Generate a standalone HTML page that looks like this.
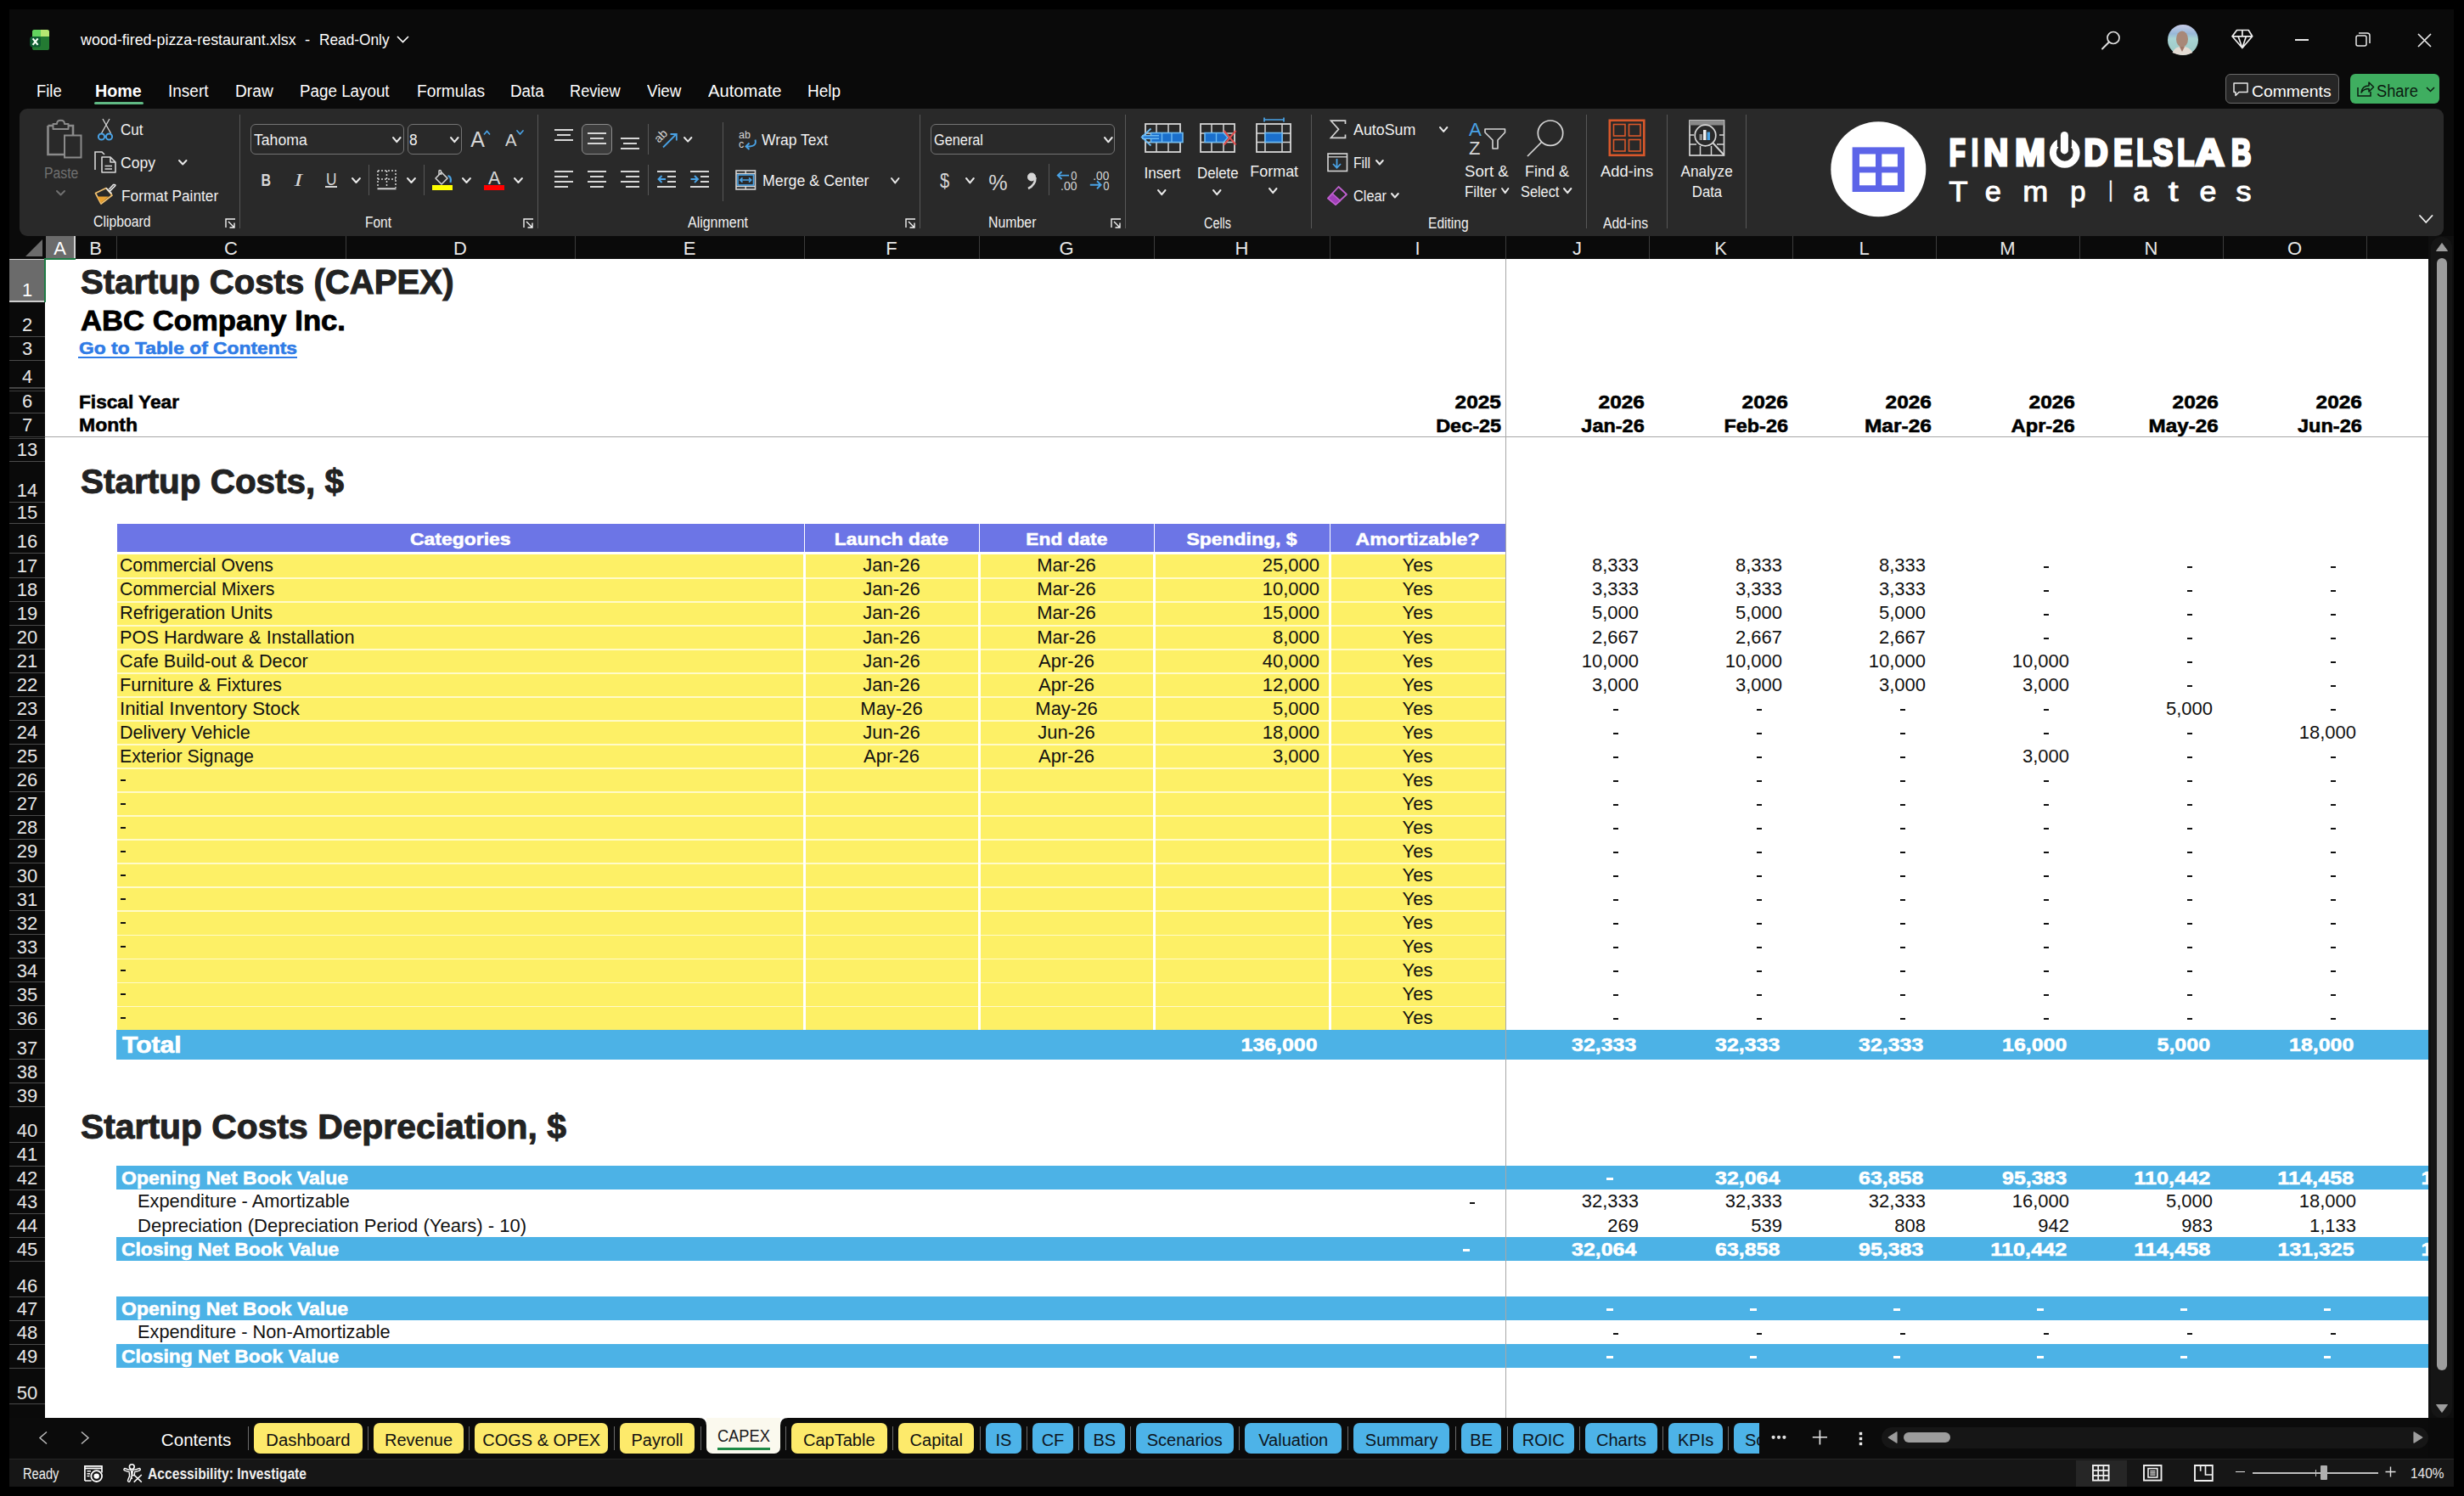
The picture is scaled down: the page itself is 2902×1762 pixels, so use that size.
<!DOCTYPE html>
<html><head><meta charset="utf-8"><style>
*{margin:0;padding:0;box-sizing:border-box}
html,body{width:2902px;height:1762px;overflow:hidden;background:#000;font-family:"Liberation Sans",sans-serif}
div{position:absolute}
.t{white-space:pre}
.t span{display:inline-block}
</style></head><body>
<div style="left:11.0px;top:11.0px;width:2879.0px;height:1740.0px;background:#0a0a0a;"></div>
<svg style="position:absolute;left:35.0px;top:34.0px;overflow:visible;" width="24" height="26" viewBox="0 0 24 26">
<rect x="3" y="1" width="20" height="24" rx="2.6" fill="#237a32"/>
<path d="M5.6 1 H13 V9 H3 V3.6 Q3 1 5.6 1 Z" fill="#62d25e"/>
<path d="M13 1 H20.4 Q23 1 23 3.6 V9 H13 Z" fill="#b6e872"/>
<rect x="0.3" y="9" width="12.7" height="12.4" rx="3" fill="#0e5c31"/>
<path d="M3.6 11.4 L9.6 18.9 M9.6 11.4 L3.6 18.9" stroke="#f4fff4" stroke-width="2.2"/></svg>
<div class="t" style="left:95.4px;top:38.1px;width:4000px;text-align:left;font-size:18.5px;line-height:18.5px;font-weight:400;color:#ffffff;font-family:'Liberation Sans', sans-serif;"><span id="t0" style="transform-origin:left;transform:scaleX(0.9672)">wood-fired-pizza-restaurant.xlsx</span></div>
<div class="t" style="left:-1638.0px;top:38.1px;width:4000px;text-align:center;font-size:18.5px;line-height:18.5px;font-weight:400;color:#ffffff;font-family:'Liberation Sans', sans-serif;"><span id="t1" style="transform-origin:center;">-</span></div>
<div class="t" style="left:376.0px;top:38.1px;width:4000px;text-align:left;font-size:18.5px;line-height:18.5px;font-weight:400;color:#ffffff;font-family:'Liberation Sans', sans-serif;"><span id="t2" style="transform-origin:left;transform:scaleX(0.9340)">Read-Only</span></div>
<svg style="position:absolute;left:467.0px;top:42.0px;overflow:visible;" width="15" height="9" viewBox="0 0 15 9"><path d="M1 1 L7.5 7.5 L14 1" stroke="#fff" stroke-width="1.6" fill="none"/></svg>
<svg style="position:absolute;left:2474.0px;top:36.0px;overflow:visible;" width="24" height="24" viewBox="0 0 24 24"><circle cx="15" cy="8.5" r="7" stroke="#e0e0e0" stroke-width="1.7" fill="none"/><path d="M10 13.5 L2 21.5" stroke="#e0e0e0" stroke-width="1.9" stroke-linecap="round"/></svg>
<svg style="position:absolute;left:2552.0px;top:28.0px;overflow:visible;" width="38" height="38" viewBox="0 0 38 38"><defs><linearGradient id="avbg" x1="0" y1="0" x2="0" y2="1"><stop offset="0" stop-color="#c8cce8"/><stop offset="0.3" stop-color="#98b8d8"/><stop offset="0.45" stop-color="#a8d4d4"/><stop offset="1" stop-color="#9cc8c4"/></linearGradient></defs>
<circle cx="19" cy="19" r="18" fill="url(#avbg)"/><ellipse cx="18" cy="18" rx="7" ry="9.5" fill="#a88878"/><path d="M6.5 34 Q10 26 18 27 Q26 26 30.5 34 Q19 40 6.5 34 Z" fill="#e4dcd4"/><path d="M15 27 L18 33 L21 27" fill="#a07868"/></svg>
<svg style="position:absolute;left:2627.0px;top:33.0px;overflow:visible;" width="28" height="26" viewBox="0 0 28 26"><path d="M7.5 2.5 H21.2 L25.7 9.8 L13.9 23.5 L2 9.8 Z M2 9.8 H25.7 M13.9 2.5 V9.8 M9 9.8 L13.9 23.5 L18.4 9.8" stroke="#f0f0f0" stroke-width="1.7" fill="none" stroke-linejoin="round"/></svg>
<div style="left:2703.0px;top:46.0px;width:16.0px;height:1.6px;background:#e8e8e8;"></div>
<svg style="position:absolute;left:2774.0px;top:38.0px;overflow:visible;" width="18" height="17" viewBox="0 0 18 17"><rect x="1" y="4" width="12" height="12" rx="2" stroke="#e8e8e8" stroke-width="1.5" fill="none"/><path d="M4 1 H14 Q17 1 17 4 V13" stroke="#e8e8e8" stroke-width="1.5" fill="none"/></svg>
<svg style="position:absolute;left:2847.0px;top:39.0px;overflow:visible;" width="17" height="17" viewBox="0 0 17 17"><path d="M1 1 L16 16 M16 1 L1 16" stroke="#e8e8e8" stroke-width="1.7"/></svg>
<div class="t" style="left:42.6px;top:97.1px;width:4000px;text-align:left;font-size:20px;line-height:20px;font-weight:400;color:#ffffff;font-family:'Liberation Sans', sans-serif;"><span id="t3" style="transform-origin:left;transform:scaleX(0.9183)">File</span></div>
<div class="t" style="left:111.6px;top:97.1px;width:4000px;text-align:left;font-size:20px;line-height:20px;font-weight:700;color:#ffffff;font-family:'Liberation Sans', sans-serif;"><span id="t4" style="transform-origin:left;transform:scaleX(0.9860)">Home</span></div>
<div class="t" style="left:198.0px;top:97.1px;width:4000px;text-align:left;font-size:20px;line-height:20px;font-weight:400;color:#ffffff;font-family:'Liberation Sans', sans-serif;"><span id="t5" style="transform-origin:left;transform:scaleX(0.9494)">Insert</span></div>
<div class="t" style="left:277.0px;top:97.1px;width:4000px;text-align:left;font-size:20px;line-height:20px;font-weight:400;color:#ffffff;font-family:'Liberation Sans', sans-serif;"><span id="t6" style="transform-origin:left;transform:scaleX(0.9599)">Draw</span></div>
<div class="t" style="left:353.0px;top:97.1px;width:4000px;text-align:left;font-size:20px;line-height:20px;font-weight:400;color:#ffffff;font-family:'Liberation Sans', sans-serif;"><span id="t7" style="transform-origin:left;transform:scaleX(0.9401)">Page Layout</span></div>
<div class="t" style="left:491.0px;top:97.1px;width:4000px;text-align:left;font-size:20px;line-height:20px;font-weight:400;color:#ffffff;font-family:'Liberation Sans', sans-serif;"><span id="t8" style="transform-origin:left;transform:scaleX(0.9597)">Formulas</span></div>
<div class="t" style="left:600.6px;top:97.1px;width:4000px;text-align:left;font-size:20px;line-height:20px;font-weight:400;color:#ffffff;font-family:'Liberation Sans', sans-serif;"><span id="t9" style="transform-origin:left;transform:scaleX(0.9420)">Data</span></div>
<div class="t" style="left:670.9px;top:97.1px;width:4000px;text-align:left;font-size:20px;line-height:20px;font-weight:400;color:#ffffff;font-family:'Liberation Sans', sans-serif;"><span id="t10" style="transform-origin:left;transform:scaleX(0.9088)">Review</span></div>
<div class="t" style="left:762.0px;top:97.1px;width:4000px;text-align:left;font-size:20px;line-height:20px;font-weight:400;color:#ffffff;font-family:'Liberation Sans', sans-serif;"><span id="t11" style="transform-origin:left;transform:scaleX(0.9395)">View</span></div>
<div class="t" style="left:834.0px;top:97.1px;width:4000px;text-align:left;font-size:20px;line-height:20px;font-weight:400;color:#ffffff;font-family:'Liberation Sans', sans-serif;"><span id="t12" style="transform-origin:left;transform:scaleX(1.0104)">Automate</span></div>
<div class="t" style="left:951.0px;top:97.1px;width:4000px;text-align:left;font-size:20px;line-height:20px;font-weight:400;color:#ffffff;font-family:'Liberation Sans', sans-serif;"><span id="t13" style="transform-origin:left;transform:scaleX(0.9480)">Help</span></div>
<div style="left:111.0px;top:120.0px;width:58.0px;height:3.0px;background:#5fb883;border-radius:1.5px"></div>
<div style="left:2621.0px;top:87.0px;width:134.0px;height:35.0px;background:#262626;border:1.3px solid #6a6a6a;border-radius:6px"></div>
<svg style="position:absolute;left:2629.0px;top:96.0px;overflow:visible;" width="20" height="18" viewBox="0 0 20 18"><path d="M2 2 H18 V12.5 H8 L4 16.5 V12.5 H2 Z" stroke="#e8e8e8" stroke-width="1.5" fill="none" stroke-linejoin="round"/></svg>
<div class="t" style="left:2652.3px;top:97.9px;width:4000px;text-align:left;font-size:19px;line-height:19px;font-weight:400;color:#ffffff;font-family:'Liberation Sans', sans-serif;"><span id="t14" style="transform-origin:left;transform:scaleX(1.0189)">Comments</span></div>
<div style="left:2768.0px;top:87.0px;width:105.0px;height:35.0px;background:#3fae60;border-radius:6px"></div>
<svg style="position:absolute;left:2775.0px;top:95.0px;overflow:visible;" width="22" height="20" viewBox="0 0 22 20"><path d="M2 8 V18 H17 V13" stroke="#0c1a10" stroke-width="1.5" fill="none"/><path d="M6 14 Q7 6 15 6 V2 L20.5 7.5 L15 13 V9.5 Q9 9.5 6 14 Z" stroke="#0c1a10" stroke-width="1.5" fill="none" stroke-linejoin="round"/></svg>
<div class="t" style="left:2798.7px;top:97.1px;width:4000px;text-align:left;font-size:20px;line-height:20px;font-weight:400;color:#0c1a10;font-family:'Liberation Sans', sans-serif;"><span id="t15" style="transform-origin:left;transform:scaleX(0.9143)">Share</span></div>
<svg style="position:absolute;left:2857.0px;top:102.0px;overflow:visible;" width="11" height="7" viewBox="0 0 11 7"><path d="M1 1 L5.5 5.5 L10 1" stroke="#0c1a10" stroke-width="1.5" fill="none"/></svg>
<div style="left:11.0px;top:278.0px;width:2849.0px;height:27.0px;background:#0a0a0a;"></div>
<svg style="position:absolute;left:30.0px;top:282.0px;overflow:visible;" width="21" height="20" viewBox="0 0 21 20"><path d="M20 0 V20 H0 Z" fill="#6b6b6b"/></svg>
<div style="left:53.5px;top:278.0px;width:34.5px;height:26.5px;background:#6b6b6b;"></div>
<div style="left:87.0px;top:278.0px;width:1.5px;height:26.5px;background:#d0d0d0;"></div>
<div class="t" style="left:-1929.5px;top:281.7px;width:4000px;text-align:center;font-size:22px;line-height:22px;font-weight:400;color:#ffffff;font-family:'Liberation Sans', sans-serif;"><span id="t16" style="transform-origin:center;">A</span></div>
<div style="left:136.5px;top:278.0px;width:1.0px;height:27.0px;background:#3c3c3c;"></div>
<div class="t" style="left:-1887.5px;top:281.7px;width:4000px;text-align:center;font-size:22px;line-height:22px;font-weight:400;color:#e8e8e8;font-family:'Liberation Sans', sans-serif;"><span id="t17" style="transform-origin:center;">B</span></div>
<div style="left:406.5px;top:278.0px;width:1.0px;height:27.0px;background:#3c3c3c;"></div>
<div class="t" style="left:-1728.0px;top:281.7px;width:4000px;text-align:center;font-size:22px;line-height:22px;font-weight:400;color:#e8e8e8;font-family:'Liberation Sans', sans-serif;"><span id="t18" style="transform-origin:center;">C</span></div>
<div style="left:676.5px;top:278.0px;width:1.0px;height:27.0px;background:#3c3c3c;"></div>
<div class="t" style="left:-1458.0px;top:281.7px;width:4000px;text-align:center;font-size:22px;line-height:22px;font-weight:400;color:#e8e8e8;font-family:'Liberation Sans', sans-serif;"><span id="t19" style="transform-origin:center;">D</span></div>
<div style="left:946.5px;top:278.0px;width:1.0px;height:27.0px;background:#3c3c3c;"></div>
<div class="t" style="left:-1188.0px;top:281.7px;width:4000px;text-align:center;font-size:22px;line-height:22px;font-weight:400;color:#e8e8e8;font-family:'Liberation Sans', sans-serif;"><span id="t20" style="transform-origin:center;">E</span></div>
<div style="left:1152.5px;top:278.0px;width:1.0px;height:27.0px;background:#3c3c3c;"></div>
<div class="t" style="left:-950.0px;top:281.7px;width:4000px;text-align:center;font-size:22px;line-height:22px;font-weight:400;color:#e8e8e8;font-family:'Liberation Sans', sans-serif;"><span id="t21" style="transform-origin:center;">F</span></div>
<div style="left:1358.5px;top:278.0px;width:1.0px;height:27.0px;background:#3c3c3c;"></div>
<div class="t" style="left:-744.0px;top:281.7px;width:4000px;text-align:center;font-size:22px;line-height:22px;font-weight:400;color:#e8e8e8;font-family:'Liberation Sans', sans-serif;"><span id="t22" style="transform-origin:center;">G</span></div>
<div style="left:1565.5px;top:278.0px;width:1.0px;height:27.0px;background:#3c3c3c;"></div>
<div class="t" style="left:-537.5px;top:281.7px;width:4000px;text-align:center;font-size:22px;line-height:22px;font-weight:400;color:#e8e8e8;font-family:'Liberation Sans', sans-serif;"><span id="t23" style="transform-origin:center;">H</span></div>
<div style="left:1772.5px;top:278.0px;width:1.0px;height:27.0px;background:#3c3c3c;"></div>
<div class="t" style="left:-330.5px;top:281.7px;width:4000px;text-align:center;font-size:22px;line-height:22px;font-weight:400;color:#e8e8e8;font-family:'Liberation Sans', sans-serif;"><span id="t24" style="transform-origin:center;">I</span></div>
<div style="left:1941.5px;top:278.0px;width:1.0px;height:27.0px;background:#3c3c3c;"></div>
<div class="t" style="left:-142.5px;top:281.7px;width:4000px;text-align:center;font-size:22px;line-height:22px;font-weight:400;color:#e8e8e8;font-family:'Liberation Sans', sans-serif;"><span id="t25" style="transform-origin:center;">J</span></div>
<div style="left:2110.5px;top:278.0px;width:1.0px;height:27.0px;background:#3c3c3c;"></div>
<div class="t" style="left:26.5px;top:281.7px;width:4000px;text-align:center;font-size:22px;line-height:22px;font-weight:400;color:#e8e8e8;font-family:'Liberation Sans', sans-serif;"><span id="t26" style="transform-origin:center;">K</span></div>
<div style="left:2279.5px;top:278.0px;width:1.0px;height:27.0px;background:#3c3c3c;"></div>
<div class="t" style="left:195.5px;top:281.7px;width:4000px;text-align:center;font-size:22px;line-height:22px;font-weight:400;color:#e8e8e8;font-family:'Liberation Sans', sans-serif;"><span id="t27" style="transform-origin:center;">L</span></div>
<div style="left:2448.5px;top:278.0px;width:1.0px;height:27.0px;background:#3c3c3c;"></div>
<div class="t" style="left:364.5px;top:281.7px;width:4000px;text-align:center;font-size:22px;line-height:22px;font-weight:400;color:#e8e8e8;font-family:'Liberation Sans', sans-serif;"><span id="t28" style="transform-origin:center;">M</span></div>
<div style="left:2617.5px;top:278.0px;width:1.0px;height:27.0px;background:#3c3c3c;"></div>
<div class="t" style="left:533.5px;top:281.7px;width:4000px;text-align:center;font-size:22px;line-height:22px;font-weight:400;color:#e8e8e8;font-family:'Liberation Sans', sans-serif;"><span id="t29" style="transform-origin:center;">N</span></div>
<div style="left:2786.5px;top:278.0px;width:1.0px;height:27.0px;background:#3c3c3c;"></div>
<div class="t" style="left:702.5px;top:281.7px;width:4000px;text-align:center;font-size:22px;line-height:22px;font-weight:400;color:#e8e8e8;font-family:'Liberation Sans', sans-serif;"><span id="t30" style="transform-origin:center;">O</span></div>
<div style="left:2955.5px;top:278.0px;width:1.0px;height:27.0px;background:#3c3c3c;"></div>
<div style="left:11.0px;top:305.0px;width:42.0px;height:1365.0px;background:#0a0a0a;"></div>
<div class="t" style="left:-1968.0px;top:331.1px;width:4000px;text-align:center;font-size:22px;line-height:22px;font-weight:400;color:#ffffff;font-family:'Liberation Sans', sans-serif;"><span id="t31" style="transform-origin:center;">1</span></div>
<div style="left:11.0px;top:354.5px;width:42.0px;height:1.0px;background:#4a4a4a;"></div>
<div class="t" style="left:-1968.0px;top:372.1px;width:4000px;text-align:center;font-size:22px;line-height:22px;font-weight:400;color:#e6e6e6;font-family:'Liberation Sans', sans-serif;"><span id="t32" style="transform-origin:center;">2</span></div>
<div style="left:11.0px;top:395.5px;width:42.0px;height:1.0px;background:#4a4a4a;"></div>
<div class="t" style="left:-1968.0px;top:400.1px;width:4000px;text-align:center;font-size:22px;line-height:22px;font-weight:400;color:#e6e6e6;font-family:'Liberation Sans', sans-serif;"><span id="t33" style="transform-origin:center;">3</span></div>
<div style="left:11.0px;top:423.5px;width:42.0px;height:1.0px;background:#4a4a4a;"></div>
<div class="t" style="left:-1968.0px;top:432.6px;width:4000px;text-align:center;font-size:22px;line-height:22px;font-weight:400;color:#e6e6e6;font-family:'Liberation Sans', sans-serif;"><span id="t34" style="transform-origin:center;">4</span></div>
<div style="left:11.0px;top:456.0px;width:42.0px;height:1.0px;background:#4a4a4a;"></div>
<div class="t" style="left:-1968.0px;top:462.1px;width:4000px;text-align:center;font-size:22px;line-height:22px;font-weight:400;color:#e6e6e6;font-family:'Liberation Sans', sans-serif;"><span id="t35" style="transform-origin:center;">6</span></div>
<div style="left:11.0px;top:485.5px;width:42.0px;height:1.0px;background:#4a4a4a;"></div>
<div class="t" style="left:-1968.0px;top:490.1px;width:4000px;text-align:center;font-size:22px;line-height:22px;font-weight:400;color:#e6e6e6;font-family:'Liberation Sans', sans-serif;"><span id="t36" style="transform-origin:center;">7</span></div>
<div style="left:11.0px;top:513.5px;width:42.0px;height:1.0px;background:#4a4a4a;"></div>
<div class="t" style="left:-1968.0px;top:519.1px;width:4000px;text-align:center;font-size:22px;line-height:22px;font-weight:400;color:#e6e6e6;font-family:'Liberation Sans', sans-serif;"><span id="t37" style="transform-origin:center;">13</span></div>
<div style="left:11.0px;top:542.5px;width:42.0px;height:1.0px;background:#4a4a4a;"></div>
<div class="t" style="left:-1968.0px;top:567.1px;width:4000px;text-align:center;font-size:22px;line-height:22px;font-weight:400;color:#e6e6e6;font-family:'Liberation Sans', sans-serif;"><span id="t38" style="transform-origin:center;">14</span></div>
<div style="left:11.0px;top:590.5px;width:42.0px;height:1.0px;background:#4a4a4a;"></div>
<div class="t" style="left:-1968.0px;top:592.6px;width:4000px;text-align:center;font-size:22px;line-height:22px;font-weight:400;color:#e6e6e6;font-family:'Liberation Sans', sans-serif;"><span id="t39" style="transform-origin:center;">15</span></div>
<div style="left:11.0px;top:616.0px;width:42.0px;height:1.0px;background:#4a4a4a;"></div>
<div class="t" style="left:-1968.0px;top:627.1px;width:4000px;text-align:center;font-size:22px;line-height:22px;font-weight:400;color:#e6e6e6;font-family:'Liberation Sans', sans-serif;"><span id="t40" style="transform-origin:center;">16</span></div>
<div style="left:11.0px;top:650.5px;width:42.0px;height:1.0px;background:#4a4a4a;"></div>
<div class="t" style="left:-1968.0px;top:656.1px;width:4000px;text-align:center;font-size:22px;line-height:22px;font-weight:400;color:#e6e6e6;font-family:'Liberation Sans', sans-serif;"><span id="t41" style="transform-origin:center;">17</span></div>
<div style="left:11.0px;top:679.5px;width:42.0px;height:1.0px;background:#4a4a4a;"></div>
<div class="t" style="left:-1968.0px;top:684.1px;width:4000px;text-align:center;font-size:22px;line-height:22px;font-weight:400;color:#e6e6e6;font-family:'Liberation Sans', sans-serif;"><span id="t42" style="transform-origin:center;">18</span></div>
<div style="left:11.0px;top:707.5px;width:42.0px;height:1.0px;background:#4a4a4a;"></div>
<div class="t" style="left:-1968.0px;top:712.1px;width:4000px;text-align:center;font-size:22px;line-height:22px;font-weight:400;color:#e6e6e6;font-family:'Liberation Sans', sans-serif;"><span id="t43" style="transform-origin:center;">19</span></div>
<div style="left:11.0px;top:735.6px;width:42.0px;height:1.0px;background:#4a4a4a;"></div>
<div class="t" style="left:-1968.0px;top:740.2px;width:4000px;text-align:center;font-size:22px;line-height:22px;font-weight:400;color:#e6e6e6;font-family:'Liberation Sans', sans-serif;"><span id="t44" style="transform-origin:center;">20</span></div>
<div style="left:11.0px;top:763.6px;width:42.0px;height:1.0px;background:#4a4a4a;"></div>
<div class="t" style="left:-1968.0px;top:768.2px;width:4000px;text-align:center;font-size:22px;line-height:22px;font-weight:400;color:#e6e6e6;font-family:'Liberation Sans', sans-serif;"><span id="t45" style="transform-origin:center;">21</span></div>
<div style="left:11.0px;top:791.6px;width:42.0px;height:1.0px;background:#4a4a4a;"></div>
<div class="t" style="left:-1968.0px;top:796.2px;width:4000px;text-align:center;font-size:22px;line-height:22px;font-weight:400;color:#e6e6e6;font-family:'Liberation Sans', sans-serif;"><span id="t46" style="transform-origin:center;">22</span></div>
<div style="left:11.0px;top:819.6px;width:42.0px;height:1.0px;background:#4a4a4a;"></div>
<div class="t" style="left:-1968.0px;top:824.3px;width:4000px;text-align:center;font-size:22px;line-height:22px;font-weight:400;color:#e6e6e6;font-family:'Liberation Sans', sans-serif;"><span id="t47" style="transform-origin:center;">23</span></div>
<div style="left:11.0px;top:847.7px;width:42.0px;height:1.0px;background:#4a4a4a;"></div>
<div class="t" style="left:-1968.0px;top:852.3px;width:4000px;text-align:center;font-size:22px;line-height:22px;font-weight:400;color:#e6e6e6;font-family:'Liberation Sans', sans-serif;"><span id="t48" style="transform-origin:center;">24</span></div>
<div style="left:11.0px;top:875.7px;width:42.0px;height:1.0px;background:#4a4a4a;"></div>
<div class="t" style="left:-1968.0px;top:880.3px;width:4000px;text-align:center;font-size:22px;line-height:22px;font-weight:400;color:#e6e6e6;font-family:'Liberation Sans', sans-serif;"><span id="t49" style="transform-origin:center;">25</span></div>
<div style="left:11.0px;top:903.7px;width:42.0px;height:1.0px;background:#4a4a4a;"></div>
<div class="t" style="left:-1968.0px;top:908.3px;width:4000px;text-align:center;font-size:22px;line-height:22px;font-weight:400;color:#e6e6e6;font-family:'Liberation Sans', sans-serif;"><span id="t50" style="transform-origin:center;">26</span></div>
<div style="left:11.0px;top:931.8px;width:42.0px;height:1.0px;background:#4a4a4a;"></div>
<div class="t" style="left:-1968.0px;top:936.4px;width:4000px;text-align:center;font-size:22px;line-height:22px;font-weight:400;color:#e6e6e6;font-family:'Liberation Sans', sans-serif;"><span id="t51" style="transform-origin:center;">27</span></div>
<div style="left:11.0px;top:959.8px;width:42.0px;height:1.0px;background:#4a4a4a;"></div>
<div class="t" style="left:-1968.0px;top:964.4px;width:4000px;text-align:center;font-size:22px;line-height:22px;font-weight:400;color:#e6e6e6;font-family:'Liberation Sans', sans-serif;"><span id="t52" style="transform-origin:center;">28</span></div>
<div style="left:11.0px;top:987.8px;width:42.0px;height:1.0px;background:#4a4a4a;"></div>
<div class="t" style="left:-1968.0px;top:992.4px;width:4000px;text-align:center;font-size:22px;line-height:22px;font-weight:400;color:#e6e6e6;font-family:'Liberation Sans', sans-serif;"><span id="t53" style="transform-origin:center;">29</span></div>
<div style="left:11.0px;top:1015.9px;width:42.0px;height:1.0px;background:#4a4a4a;"></div>
<div class="t" style="left:-1968.0px;top:1020.5px;width:4000px;text-align:center;font-size:22px;line-height:22px;font-weight:400;color:#e6e6e6;font-family:'Liberation Sans', sans-serif;"><span id="t54" style="transform-origin:center;">30</span></div>
<div style="left:11.0px;top:1043.9px;width:42.0px;height:1.0px;background:#4a4a4a;"></div>
<div class="t" style="left:-1968.0px;top:1048.5px;width:4000px;text-align:center;font-size:22px;line-height:22px;font-weight:400;color:#e6e6e6;font-family:'Liberation Sans', sans-serif;"><span id="t55" style="transform-origin:center;">31</span></div>
<div style="left:11.0px;top:1071.9px;width:42.0px;height:1.0px;background:#4a4a4a;"></div>
<div class="t" style="left:-1968.0px;top:1076.5px;width:4000px;text-align:center;font-size:22px;line-height:22px;font-weight:400;color:#e6e6e6;font-family:'Liberation Sans', sans-serif;"><span id="t56" style="transform-origin:center;">32</span></div>
<div style="left:11.0px;top:1100.0px;width:42.0px;height:1.0px;background:#4a4a4a;"></div>
<div class="t" style="left:-1968.0px;top:1104.6px;width:4000px;text-align:center;font-size:22px;line-height:22px;font-weight:400;color:#e6e6e6;font-family:'Liberation Sans', sans-serif;"><span id="t57" style="transform-origin:center;">33</span></div>
<div style="left:11.0px;top:1128.0px;width:42.0px;height:1.0px;background:#4a4a4a;"></div>
<div class="t" style="left:-1968.0px;top:1132.6px;width:4000px;text-align:center;font-size:22px;line-height:22px;font-weight:400;color:#e6e6e6;font-family:'Liberation Sans', sans-serif;"><span id="t58" style="transform-origin:center;">34</span></div>
<div style="left:11.0px;top:1156.0px;width:42.0px;height:1.0px;background:#4a4a4a;"></div>
<div class="t" style="left:-1968.0px;top:1160.6px;width:4000px;text-align:center;font-size:22px;line-height:22px;font-weight:400;color:#e6e6e6;font-family:'Liberation Sans', sans-serif;"><span id="t59" style="transform-origin:center;">35</span></div>
<div style="left:11.0px;top:1184.0px;width:42.0px;height:1.0px;background:#4a4a4a;"></div>
<div class="t" style="left:-1968.0px;top:1188.6px;width:4000px;text-align:center;font-size:22px;line-height:22px;font-weight:400;color:#e6e6e6;font-family:'Liberation Sans', sans-serif;"><span id="t60" style="transform-origin:center;">36</span></div>
<div style="left:11.0px;top:1212.1px;width:42.0px;height:1.0px;background:#4a4a4a;"></div>
<div class="t" style="left:-1968.0px;top:1223.7px;width:4000px;text-align:center;font-size:22px;line-height:22px;font-weight:400;color:#e6e6e6;font-family:'Liberation Sans', sans-serif;"><span id="t61" style="transform-origin:center;">37</span></div>
<div style="left:11.0px;top:1247.1px;width:42.0px;height:1.0px;background:#4a4a4a;"></div>
<div class="t" style="left:-1968.0px;top:1251.6px;width:4000px;text-align:center;font-size:22px;line-height:22px;font-weight:400;color:#e6e6e6;font-family:'Liberation Sans', sans-serif;"><span id="t62" style="transform-origin:center;">38</span></div>
<div style="left:11.0px;top:1275.0px;width:42.0px;height:1.0px;background:#4a4a4a;"></div>
<div class="t" style="left:-1968.0px;top:1279.6px;width:4000px;text-align:center;font-size:22px;line-height:22px;font-weight:400;color:#e6e6e6;font-family:'Liberation Sans', sans-serif;"><span id="t63" style="transform-origin:center;">39</span></div>
<div style="left:11.0px;top:1303.0px;width:42.0px;height:1.0px;background:#4a4a4a;"></div>
<div class="t" style="left:-1968.0px;top:1321.3px;width:4000px;text-align:center;font-size:22px;line-height:22px;font-weight:400;color:#e6e6e6;font-family:'Liberation Sans', sans-serif;"><span id="t64" style="transform-origin:center;">40</span></div>
<div style="left:11.0px;top:1344.7px;width:42.0px;height:1.0px;background:#4a4a4a;"></div>
<div class="t" style="left:-1968.0px;top:1349.1px;width:4000px;text-align:center;font-size:22px;line-height:22px;font-weight:400;color:#e6e6e6;font-family:'Liberation Sans', sans-serif;"><span id="t65" style="transform-origin:center;">41</span></div>
<div style="left:11.0px;top:1372.5px;width:42.0px;height:1.0px;background:#4a4a4a;"></div>
<div class="t" style="left:-1968.0px;top:1377.1px;width:4000px;text-align:center;font-size:22px;line-height:22px;font-weight:400;color:#e6e6e6;font-family:'Liberation Sans', sans-serif;"><span id="t66" style="transform-origin:center;">42</span></div>
<div style="left:11.0px;top:1400.5px;width:42.0px;height:1.0px;background:#4a4a4a;"></div>
<div class="t" style="left:-1968.0px;top:1405.1px;width:4000px;text-align:center;font-size:22px;line-height:22px;font-weight:400;color:#e6e6e6;font-family:'Liberation Sans', sans-serif;"><span id="t67" style="transform-origin:center;">43</span></div>
<div style="left:11.0px;top:1428.5px;width:42.0px;height:1.0px;background:#4a4a4a;"></div>
<div class="t" style="left:-1968.0px;top:1433.3px;width:4000px;text-align:center;font-size:22px;line-height:22px;font-weight:400;color:#e6e6e6;font-family:'Liberation Sans', sans-serif;"><span id="t68" style="transform-origin:center;">44</span></div>
<div style="left:11.0px;top:1456.7px;width:42.0px;height:1.0px;background:#4a4a4a;"></div>
<div class="t" style="left:-1968.0px;top:1461.4px;width:4000px;text-align:center;font-size:22px;line-height:22px;font-weight:400;color:#e6e6e6;font-family:'Liberation Sans', sans-serif;"><span id="t69" style="transform-origin:center;">45</span></div>
<div style="left:11.0px;top:1484.8px;width:42.0px;height:1.0px;background:#4a4a4a;"></div>
<div class="t" style="left:-1968.0px;top:1503.5px;width:4000px;text-align:center;font-size:22px;line-height:22px;font-weight:400;color:#e6e6e6;font-family:'Liberation Sans', sans-serif;"><span id="t70" style="transform-origin:center;">46</span></div>
<div style="left:11.0px;top:1526.9px;width:42.0px;height:1.0px;background:#4a4a4a;"></div>
<div class="t" style="left:-1968.0px;top:1531.1px;width:4000px;text-align:center;font-size:22px;line-height:22px;font-weight:400;color:#e6e6e6;font-family:'Liberation Sans', sans-serif;"><span id="t71" style="transform-origin:center;">47</span></div>
<div style="left:11.0px;top:1554.5px;width:42.0px;height:1.0px;background:#4a4a4a;"></div>
<div class="t" style="left:-1968.0px;top:1559.1px;width:4000px;text-align:center;font-size:22px;line-height:22px;font-weight:400;color:#e6e6e6;font-family:'Liberation Sans', sans-serif;"><span id="t72" style="transform-origin:center;">48</span></div>
<div style="left:11.0px;top:1582.5px;width:42.0px;height:1.0px;background:#4a4a4a;"></div>
<div class="t" style="left:-1968.0px;top:1587.3px;width:4000px;text-align:center;font-size:22px;line-height:22px;font-weight:400;color:#e6e6e6;font-family:'Liberation Sans', sans-serif;"><span id="t73" style="transform-origin:center;">49</span></div>
<div style="left:11.0px;top:1610.7px;width:42.0px;height:1.0px;background:#4a4a4a;"></div>
<div class="t" style="left:-1968.0px;top:1629.5px;width:4000px;text-align:center;font-size:22px;line-height:22px;font-weight:400;color:#e6e6e6;font-family:'Liberation Sans', sans-serif;"><span id="t74" style="transform-origin:center;">50</span></div>
<div style="left:11.0px;top:1652.9px;width:42.0px;height:1.0px;background:#4a4a4a;"></div>
<div style="left:11.0px;top:305.0px;width:41.5px;height:49.5px;background:#6b6b6b;"></div>
<div style="left:11.0px;top:304.5px;width:41.5px;height:1.5px;background:#cfcfcf;"></div>
<div style="left:11.0px;top:354.0px;width:41.5px;height:1.5px;background:#cfcfcf;"></div>
<div class="t" style="left:-1968.0px;top:331.1px;width:4000px;text-align:center;font-size:22px;line-height:22px;font-weight:400;color:#ffffff;font-family:'Liberation Sans', sans-serif;"><span id="t75" style="transform-origin:center;">1</span></div>
<div style="left:11.0px;top:456.5px;width:42.0px;height:1.0px;background:#3d3d3d;"></div>
<div style="left:11.0px;top:459.5px;width:42.0px;height:1.0px;background:#3d3d3d;"></div>
<div style="left:11.0px;top:513.5px;width:42.0px;height:1.0px;background:#3d3d3d;"></div>
<div style="left:11.0px;top:516.0px;width:42.0px;height:1.0px;background:#3d3d3d;"></div>
<div style="left:53.0px;top:305.0px;width:2807.0px;height:1365.0px;background:#ffffff;"></div>
<div style="left:52.0px;top:304.0px;width:2.0px;height:52.0px;background:#1e7b45;"></div>
<div style="left:52.0px;top:304.0px;width:37.0px;height:2.0px;background:#1e7b45;"></div>
<div class="t" style="left:95.0px;top:311.6px;width:4000px;text-align:left;font-size:40px;line-height:40px;font-weight:700;color:#222222;font-family:'Liberation Sans', sans-serif;;-webkit-text-stroke:1.00px #222222"><span id="t76" style="transform-origin:left;transform:scaleX(1.0039)">Startup Costs (CAPEX)</span></div>
<div class="t" style="left:95.0px;top:361.1px;width:4000px;text-align:left;font-size:33px;line-height:33px;font-weight:700;color:#000000;font-family:'Liberation Sans', sans-serif;;-webkit-text-stroke:0.83px #000000"><span id="t77" style="transform-origin:left;transform:scaleX(1.0503)">ABC Company Inc.</span></div>
<div class="t" style="left:92.5px;top:400.1px;width:4000px;text-align:left;font-size:20px;line-height:20px;font-weight:700;color:#2f7be6;font-family:'Liberation Sans', sans-serif;;-webkit-text-stroke:0.55px #2f7be6"><span id="t78" style="transform-origin:left;transform:scaleX(1.1414)">Go to Table of Contents</span></div>
<div style="left:92.0px;top:419.5px;width:258.0px;height:2.0px;background:#2f7be6;"></div>
<div class="t" style="left:93.0px;top:462.9px;width:4000px;text-align:left;font-size:22px;line-height:22px;font-weight:700;color:#000;font-family:'Liberation Sans', sans-serif;;-webkit-text-stroke:0.55px #000"><span id="t79" style="transform-origin:left;transform:scaleX(1.0299)">Fiscal Year</span></div>
<div class="t" style="left:93.0px;top:490.4px;width:4000px;text-align:left;font-size:22px;line-height:22px;font-weight:700;color:#000;font-family:'Liberation Sans', sans-serif;;-webkit-text-stroke:0.55px #000"><span id="t80" style="transform-origin:left;transform:scaleX(1.0459)">Month</span></div>
<div class="t" style="left:-2232.0px;top:463.4px;width:4000px;text-align:right;font-size:22px;line-height:22px;font-weight:700;color:#000;font-family:'Liberation Sans', sans-serif;;-webkit-text-stroke:0.55px #000"><span id="t81" style="transform-origin:right;transform:scaleX(1.1113)">2025</span></div>
<div class="t" style="left:-2232.0px;top:490.9px;width:4000px;text-align:right;font-size:22px;line-height:22px;font-weight:700;color:#000;font-family:'Liberation Sans', sans-serif;;-webkit-text-stroke:0.55px #000"><span id="t82" style="transform-origin:right;transform:scaleX(1.0671)">Dec-25</span></div>
<div class="t" style="left:-2063.0px;top:463.4px;width:4000px;text-align:right;font-size:22px;line-height:22px;font-weight:700;color:#000;font-family:'Liberation Sans', sans-serif;;-webkit-text-stroke:0.55px #000"><span id="t83" style="transform-origin:right;transform:scaleX(1.1113)">2026</span></div>
<div class="t" style="left:-2063.0px;top:490.9px;width:4000px;text-align:right;font-size:22px;line-height:22px;font-weight:700;color:#000;font-family:'Liberation Sans', sans-serif;;-webkit-text-stroke:0.55px #000"><span id="t84" style="transform-origin:right;transform:scaleX(1.0671)">Jan-26</span></div>
<div class="t" style="left:-1894.0px;top:463.4px;width:4000px;text-align:right;font-size:22px;line-height:22px;font-weight:700;color:#000;font-family:'Liberation Sans', sans-serif;;-webkit-text-stroke:0.55px #000"><span id="t85" style="transform-origin:right;transform:scaleX(1.1113)">2026</span></div>
<div class="t" style="left:-1894.0px;top:490.9px;width:4000px;text-align:right;font-size:22px;line-height:22px;font-weight:700;color:#000;font-family:'Liberation Sans', sans-serif;;-webkit-text-stroke:0.55px #000"><span id="t86" style="transform-origin:right;transform:scaleX(1.0631)">Feb-26</span></div>
<div class="t" style="left:-1725.0px;top:463.4px;width:4000px;text-align:right;font-size:22px;line-height:22px;font-weight:700;color:#000;font-family:'Liberation Sans', sans-serif;;-webkit-text-stroke:0.55px #000"><span id="t87" style="transform-origin:right;transform:scaleX(1.1113)">2026</span></div>
<div class="t" style="left:-1725.0px;top:490.9px;width:4000px;text-align:right;font-size:22px;line-height:22px;font-weight:700;color:#000;font-family:'Liberation Sans', sans-serif;;-webkit-text-stroke:0.55px #000"><span id="t88" style="transform-origin:right;transform:scaleX(1.1139)">Mar-26</span></div>
<div class="t" style="left:-1556.0px;top:463.4px;width:4000px;text-align:right;font-size:22px;line-height:22px;font-weight:700;color:#000;font-family:'Liberation Sans', sans-serif;;-webkit-text-stroke:0.55px #000"><span id="t89" style="transform-origin:right;transform:scaleX(1.1113)">2026</span></div>
<div class="t" style="left:-1556.0px;top:490.9px;width:4000px;text-align:right;font-size:22px;line-height:22px;font-weight:700;color:#000;font-family:'Liberation Sans', sans-serif;;-webkit-text-stroke:0.55px #000"><span id="t90" style="transform-origin:right;transform:scaleX(1.0791)">Apr-26</span></div>
<div class="t" style="left:-1387.0px;top:463.4px;width:4000px;text-align:right;font-size:22px;line-height:22px;font-weight:700;color:#000;font-family:'Liberation Sans', sans-serif;;-webkit-text-stroke:0.55px #000"><span id="t91" style="transform-origin:right;transform:scaleX(1.1113)">2026</span></div>
<div class="t" style="left:-1387.0px;top:490.9px;width:4000px;text-align:right;font-size:22px;line-height:22px;font-weight:700;color:#000;font-family:'Liberation Sans', sans-serif;;-webkit-text-stroke:0.55px #000"><span id="t92" style="transform-origin:right;transform:scaleX(1.0993)">May-26</span></div>
<div class="t" style="left:-1218.0px;top:463.4px;width:4000px;text-align:right;font-size:22px;line-height:22px;font-weight:700;color:#000;font-family:'Liberation Sans', sans-serif;;-webkit-text-stroke:0.55px #000"><span id="t93" style="transform-origin:right;transform:scaleX(1.1113)">2026</span></div>
<div class="t" style="left:-1218.0px;top:490.9px;width:4000px;text-align:right;font-size:22px;line-height:22px;font-weight:700;color:#000;font-family:'Liberation Sans', sans-serif;;-webkit-text-stroke:0.55px #000"><span id="t94" style="transform-origin:right;transform:scaleX(1.0716)">Jun-26</span></div>
<div style="left:53.0px;top:513.5px;width:2807.0px;height:1.2px;background:#a8a8a8;"></div>
<div class="t" style="left:95.0px;top:546.6px;width:4000px;text-align:left;font-size:40px;line-height:40px;font-weight:700;color:#222222;font-family:'Liberation Sans', sans-serif;;-webkit-text-stroke:1.00px #222222"><span id="t95" style="transform-origin:left;transform:scaleX(1.0107)">Startup Costs, $</span></div>
<div style="left:137.5px;top:617.0px;width:1635.5px;height:33.0px;background:#6c75e6;"></div>
<div style="left:946.7px;top:617.0px;width:1.6px;height:33.0px;background:#ffffff;"></div>
<div style="left:1152.7px;top:617.0px;width:1.6px;height:33.0px;background:#ffffff;"></div>
<div style="left:1358.7px;top:617.0px;width:1.6px;height:33.0px;background:#ffffff;"></div>
<div style="left:1565.7px;top:617.0px;width:1.6px;height:33.0px;background:#ffffff;"></div>
<div class="t" style="left:-1458.0px;top:624.2px;width:4000px;text-align:center;font-size:21px;line-height:21px;font-weight:700;color:#ffffff;font-family:'Liberation Sans', sans-serif;;-webkit-text-stroke:0.55px #ffffff"><span id="t96" style="transform-origin:center;transform:scaleX(1.0917)">Categories</span></div>
<div class="t" style="left:-950.0px;top:624.2px;width:4000px;text-align:center;font-size:21px;line-height:21px;font-weight:700;color:#ffffff;font-family:'Liberation Sans', sans-serif;;-webkit-text-stroke:0.55px #ffffff"><span id="t97" style="transform-origin:center;transform:scaleX(1.0834)">Launch date</span></div>
<div class="t" style="left:-744.0px;top:624.2px;width:4000px;text-align:center;font-size:21px;line-height:21px;font-weight:700;color:#ffffff;font-family:'Liberation Sans', sans-serif;;-webkit-text-stroke:0.55px #ffffff"><span id="t98" style="transform-origin:center;transform:scaleX(1.0825)">End date</span></div>
<div class="t" style="left:-537.5px;top:624.2px;width:4000px;text-align:center;font-size:21px;line-height:21px;font-weight:700;color:#ffffff;font-family:'Liberation Sans', sans-serif;;-webkit-text-stroke:0.55px #ffffff"><span id="t99" style="transform-origin:center;transform:scaleX(1.0923)">Spending, $</span></div>
<div class="t" style="left:-330.5px;top:624.2px;width:4000px;text-align:center;font-size:21px;line-height:21px;font-weight:700;color:#ffffff;font-family:'Liberation Sans', sans-serif;;-webkit-text-stroke:0.55px #ffffff"><span id="t100" style="transform-origin:center;transform:scaleX(1.0976)">Amortizable?</span></div>
<div style="left:138.0px;top:653.0px;width:1635.0px;height:559.6px;background:#fdf066;"></div>
<div style="left:138.0px;top:680.0px;width:1635.0px;height:1.5px;background:#fffbc8;"></div>
<div style="left:138.0px;top:708.0px;width:1635.0px;height:1.5px;background:#fffbc8;"></div>
<div style="left:138.0px;top:736.1px;width:1635.0px;height:1.5px;background:#fffbc8;"></div>
<div style="left:138.0px;top:764.1px;width:1635.0px;height:1.5px;background:#fffbc8;"></div>
<div style="left:138.0px;top:792.1px;width:1635.0px;height:1.5px;background:#fffbc8;"></div>
<div style="left:138.0px;top:820.1px;width:1635.0px;height:1.5px;background:#fffbc8;"></div>
<div style="left:138.0px;top:848.2px;width:1635.0px;height:1.5px;background:#fffbc8;"></div>
<div style="left:138.0px;top:876.2px;width:1635.0px;height:1.5px;background:#fffbc8;"></div>
<div style="left:138.0px;top:904.2px;width:1635.0px;height:1.5px;background:#fffbc8;"></div>
<div style="left:138.0px;top:932.3px;width:1635.0px;height:1.5px;background:#fffbc8;"></div>
<div style="left:138.0px;top:960.3px;width:1635.0px;height:1.5px;background:#fffbc8;"></div>
<div style="left:138.0px;top:988.3px;width:1635.0px;height:1.5px;background:#fffbc8;"></div>
<div style="left:138.0px;top:1016.4px;width:1635.0px;height:1.5px;background:#fffbc8;"></div>
<div style="left:138.0px;top:1044.4px;width:1635.0px;height:1.5px;background:#fffbc8;"></div>
<div style="left:138.0px;top:1072.4px;width:1635.0px;height:1.5px;background:#fffbc8;"></div>
<div style="left:138.0px;top:1100.5px;width:1635.0px;height:1.5px;background:#fffbc8;"></div>
<div style="left:138.0px;top:1128.5px;width:1635.0px;height:1.5px;background:#fffbc8;"></div>
<div style="left:138.0px;top:1156.5px;width:1635.0px;height:1.5px;background:#fffbc8;"></div>
<div style="left:138.0px;top:1184.5px;width:1635.0px;height:1.5px;background:#fffbc8;"></div>
<div style="left:946.0px;top:653.0px;width:3.0px;height:559.6px;background:#ffffff;"></div>
<div style="left:1152.0px;top:653.0px;width:3.0px;height:559.6px;background:#ffffff;"></div>
<div style="left:1358.0px;top:653.0px;width:3.0px;height:559.6px;background:#ffffff;"></div>
<div style="left:1565.0px;top:653.0px;width:3.0px;height:559.6px;background:#ffffff;"></div>
<div class="t" style="left:140.5px;top:655.4px;width:4000px;text-align:left;font-size:22px;line-height:22px;font-weight:400;color:#111111;font-family:'Liberation Sans', sans-serif;"><span id="t101" style="transform-origin:left;transform:scaleX(0.9677)">Commercial Ovens</span></div>
<div class="t" style="left:-950.0px;top:655.4px;width:4000px;text-align:center;font-size:22px;line-height:22px;font-weight:400;color:#111111;font-family:'Liberation Sans', sans-serif;"><span id="t102" style="transform-origin:center;">Jan-26</span></div>
<div class="t" style="left:-744.0px;top:655.4px;width:4000px;text-align:center;font-size:22px;line-height:22px;font-weight:400;color:#111111;font-family:'Liberation Sans', sans-serif;"><span id="t103" style="transform-origin:center;">Mar-26</span></div>
<div class="t" style="left:-2446.0px;top:655.4px;width:4000px;text-align:right;font-size:22px;line-height:22px;font-weight:400;color:#111111;font-family:'Liberation Sans', sans-serif;"><span id="t104" style="transform-origin:right;">25,000</span></div>
<div class="t" style="left:-330.5px;top:655.4px;width:4000px;text-align:center;font-size:22px;line-height:22px;font-weight:400;color:#111111;font-family:'Liberation Sans', sans-serif;"><span id="t105" style="transform-origin:center;">Yes</span></div>
<div class="t" style="left:-2070.0px;top:655.4px;width:4000px;text-align:right;font-size:22px;line-height:22px;font-weight:400;color:#111111;font-family:'Liberation Sans', sans-serif;"><span id="t106" style="transform-origin:right;">8,333</span></div>
<div class="t" style="left:-1901.0px;top:655.4px;width:4000px;text-align:right;font-size:22px;line-height:22px;font-weight:400;color:#111111;font-family:'Liberation Sans', sans-serif;"><span id="t107" style="transform-origin:right;">8,333</span></div>
<div class="t" style="left:-1732.0px;top:655.4px;width:4000px;text-align:right;font-size:22px;line-height:22px;font-weight:400;color:#111111;font-family:'Liberation Sans', sans-serif;"><span id="t108" style="transform-origin:right;">8,333</span></div>
<div style="left:2407.0px;top:666.5px;width:6.0px;height:2.0px;background:#111111;"></div>
<div style="left:2576.0px;top:666.5px;width:6.0px;height:2.0px;background:#111111;"></div>
<div style="left:2745.0px;top:666.5px;width:6.0px;height:2.0px;background:#111111;"></div>
<div class="t" style="left:140.5px;top:683.4px;width:4000px;text-align:left;font-size:22px;line-height:22px;font-weight:400;color:#111111;font-family:'Liberation Sans', sans-serif;"><span id="t109" style="transform-origin:left;transform:scaleX(0.9695)">Commercial Mixers</span></div>
<div class="t" style="left:-950.0px;top:683.4px;width:4000px;text-align:center;font-size:22px;line-height:22px;font-weight:400;color:#111111;font-family:'Liberation Sans', sans-serif;"><span id="t110" style="transform-origin:center;">Jan-26</span></div>
<div class="t" style="left:-744.0px;top:683.4px;width:4000px;text-align:center;font-size:22px;line-height:22px;font-weight:400;color:#111111;font-family:'Liberation Sans', sans-serif;"><span id="t111" style="transform-origin:center;">Mar-26</span></div>
<div class="t" style="left:-2446.0px;top:683.4px;width:4000px;text-align:right;font-size:22px;line-height:22px;font-weight:400;color:#111111;font-family:'Liberation Sans', sans-serif;"><span id="t112" style="transform-origin:right;">10,000</span></div>
<div class="t" style="left:-330.5px;top:683.4px;width:4000px;text-align:center;font-size:22px;line-height:22px;font-weight:400;color:#111111;font-family:'Liberation Sans', sans-serif;"><span id="t113" style="transform-origin:center;">Yes</span></div>
<div class="t" style="left:-2070.0px;top:683.4px;width:4000px;text-align:right;font-size:22px;line-height:22px;font-weight:400;color:#111111;font-family:'Liberation Sans', sans-serif;"><span id="t114" style="transform-origin:right;">3,333</span></div>
<div class="t" style="left:-1901.0px;top:683.4px;width:4000px;text-align:right;font-size:22px;line-height:22px;font-weight:400;color:#111111;font-family:'Liberation Sans', sans-serif;"><span id="t115" style="transform-origin:right;">3,333</span></div>
<div class="t" style="left:-1732.0px;top:683.4px;width:4000px;text-align:right;font-size:22px;line-height:22px;font-weight:400;color:#111111;font-family:'Liberation Sans', sans-serif;"><span id="t116" style="transform-origin:right;">3,333</span></div>
<div style="left:2407.0px;top:694.5px;width:6.0px;height:2.0px;background:#111111;"></div>
<div style="left:2576.0px;top:694.5px;width:6.0px;height:2.0px;background:#111111;"></div>
<div style="left:2745.0px;top:694.5px;width:6.0px;height:2.0px;background:#111111;"></div>
<div class="t" style="left:140.5px;top:711.4px;width:4000px;text-align:left;font-size:22px;line-height:22px;font-weight:400;color:#111111;font-family:'Liberation Sans', sans-serif;"><span id="t117" style="transform-origin:left;transform:scaleX(0.9880)">Refrigeration Units</span></div>
<div class="t" style="left:-950.0px;top:711.4px;width:4000px;text-align:center;font-size:22px;line-height:22px;font-weight:400;color:#111111;font-family:'Liberation Sans', sans-serif;"><span id="t118" style="transform-origin:center;">Jan-26</span></div>
<div class="t" style="left:-744.0px;top:711.4px;width:4000px;text-align:center;font-size:22px;line-height:22px;font-weight:400;color:#111111;font-family:'Liberation Sans', sans-serif;"><span id="t119" style="transform-origin:center;">Mar-26</span></div>
<div class="t" style="left:-2446.0px;top:711.4px;width:4000px;text-align:right;font-size:22px;line-height:22px;font-weight:400;color:#111111;font-family:'Liberation Sans', sans-serif;"><span id="t120" style="transform-origin:right;">15,000</span></div>
<div class="t" style="left:-330.5px;top:711.4px;width:4000px;text-align:center;font-size:22px;line-height:22px;font-weight:400;color:#111111;font-family:'Liberation Sans', sans-serif;"><span id="t121" style="transform-origin:center;">Yes</span></div>
<div class="t" style="left:-2070.0px;top:711.4px;width:4000px;text-align:right;font-size:22px;line-height:22px;font-weight:400;color:#111111;font-family:'Liberation Sans', sans-serif;"><span id="t122" style="transform-origin:right;">5,000</span></div>
<div class="t" style="left:-1901.0px;top:711.4px;width:4000px;text-align:right;font-size:22px;line-height:22px;font-weight:400;color:#111111;font-family:'Liberation Sans', sans-serif;"><span id="t123" style="transform-origin:right;">5,000</span></div>
<div class="t" style="left:-1732.0px;top:711.4px;width:4000px;text-align:right;font-size:22px;line-height:22px;font-weight:400;color:#111111;font-family:'Liberation Sans', sans-serif;"><span id="t124" style="transform-origin:right;">5,000</span></div>
<div style="left:2407.0px;top:722.6px;width:6.0px;height:2.0px;background:#111111;"></div>
<div style="left:2576.0px;top:722.6px;width:6.0px;height:2.0px;background:#111111;"></div>
<div style="left:2745.0px;top:722.6px;width:6.0px;height:2.0px;background:#111111;"></div>
<div class="t" style="left:140.5px;top:739.5px;width:4000px;text-align:left;font-size:22px;line-height:22px;font-weight:400;color:#111111;font-family:'Liberation Sans', sans-serif;"><span id="t125" style="transform-origin:left;transform:scaleX(0.9874)">POS Hardware &amp; Installation</span></div>
<div class="t" style="left:-950.0px;top:739.5px;width:4000px;text-align:center;font-size:22px;line-height:22px;font-weight:400;color:#111111;font-family:'Liberation Sans', sans-serif;"><span id="t126" style="transform-origin:center;">Jan-26</span></div>
<div class="t" style="left:-744.0px;top:739.5px;width:4000px;text-align:center;font-size:22px;line-height:22px;font-weight:400;color:#111111;font-family:'Liberation Sans', sans-serif;"><span id="t127" style="transform-origin:center;">Mar-26</span></div>
<div class="t" style="left:-2446.0px;top:739.5px;width:4000px;text-align:right;font-size:22px;line-height:22px;font-weight:400;color:#111111;font-family:'Liberation Sans', sans-serif;"><span id="t128" style="transform-origin:right;">8,000</span></div>
<div class="t" style="left:-330.5px;top:739.5px;width:4000px;text-align:center;font-size:22px;line-height:22px;font-weight:400;color:#111111;font-family:'Liberation Sans', sans-serif;"><span id="t129" style="transform-origin:center;">Yes</span></div>
<div class="t" style="left:-2070.0px;top:739.5px;width:4000px;text-align:right;font-size:22px;line-height:22px;font-weight:400;color:#111111;font-family:'Liberation Sans', sans-serif;"><span id="t130" style="transform-origin:right;">2,667</span></div>
<div class="t" style="left:-1901.0px;top:739.5px;width:4000px;text-align:right;font-size:22px;line-height:22px;font-weight:400;color:#111111;font-family:'Liberation Sans', sans-serif;"><span id="t131" style="transform-origin:right;">2,667</span></div>
<div class="t" style="left:-1732.0px;top:739.5px;width:4000px;text-align:right;font-size:22px;line-height:22px;font-weight:400;color:#111111;font-family:'Liberation Sans', sans-serif;"><span id="t132" style="transform-origin:right;">2,667</span></div>
<div style="left:2407.0px;top:750.6px;width:6.0px;height:2.0px;background:#111111;"></div>
<div style="left:2576.0px;top:750.6px;width:6.0px;height:2.0px;background:#111111;"></div>
<div style="left:2745.0px;top:750.6px;width:6.0px;height:2.0px;background:#111111;"></div>
<div class="t" style="left:140.5px;top:767.5px;width:4000px;text-align:left;font-size:22px;line-height:22px;font-weight:400;color:#111111;font-family:'Liberation Sans', sans-serif;"><span id="t133" style="transform-origin:left;transform:scaleX(0.9858)">Cafe Build-out &amp; Decor</span></div>
<div class="t" style="left:-950.0px;top:767.5px;width:4000px;text-align:center;font-size:22px;line-height:22px;font-weight:400;color:#111111;font-family:'Liberation Sans', sans-serif;"><span id="t134" style="transform-origin:center;">Jan-26</span></div>
<div class="t" style="left:-744.0px;top:767.5px;width:4000px;text-align:center;font-size:22px;line-height:22px;font-weight:400;color:#111111;font-family:'Liberation Sans', sans-serif;"><span id="t135" style="transform-origin:center;">Apr-26</span></div>
<div class="t" style="left:-2446.0px;top:767.5px;width:4000px;text-align:right;font-size:22px;line-height:22px;font-weight:400;color:#111111;font-family:'Liberation Sans', sans-serif;"><span id="t136" style="transform-origin:right;">40,000</span></div>
<div class="t" style="left:-330.5px;top:767.5px;width:4000px;text-align:center;font-size:22px;line-height:22px;font-weight:400;color:#111111;font-family:'Liberation Sans', sans-serif;"><span id="t137" style="transform-origin:center;">Yes</span></div>
<div class="t" style="left:-2070.0px;top:767.5px;width:4000px;text-align:right;font-size:22px;line-height:22px;font-weight:400;color:#111111;font-family:'Liberation Sans', sans-serif;"><span id="t138" style="transform-origin:right;">10,000</span></div>
<div class="t" style="left:-1901.0px;top:767.5px;width:4000px;text-align:right;font-size:22px;line-height:22px;font-weight:400;color:#111111;font-family:'Liberation Sans', sans-serif;"><span id="t139" style="transform-origin:right;">10,000</span></div>
<div class="t" style="left:-1732.0px;top:767.5px;width:4000px;text-align:right;font-size:22px;line-height:22px;font-weight:400;color:#111111;font-family:'Liberation Sans', sans-serif;"><span id="t140" style="transform-origin:right;">10,000</span></div>
<div class="t" style="left:-1563.0px;top:767.5px;width:4000px;text-align:right;font-size:22px;line-height:22px;font-weight:400;color:#111111;font-family:'Liberation Sans', sans-serif;"><span id="t141" style="transform-origin:right;">10,000</span></div>
<div style="left:2576.0px;top:778.6px;width:6.0px;height:2.0px;background:#111111;"></div>
<div style="left:2745.0px;top:778.6px;width:6.0px;height:2.0px;background:#111111;"></div>
<div class="t" style="left:140.5px;top:795.5px;width:4000px;text-align:left;font-size:22px;line-height:22px;font-weight:400;color:#111111;font-family:'Liberation Sans', sans-serif;"><span id="t142" style="transform-origin:left;transform:scaleX(0.9882)">Furniture &amp; Fixtures</span></div>
<div class="t" style="left:-950.0px;top:795.5px;width:4000px;text-align:center;font-size:22px;line-height:22px;font-weight:400;color:#111111;font-family:'Liberation Sans', sans-serif;"><span id="t143" style="transform-origin:center;">Jan-26</span></div>
<div class="t" style="left:-744.0px;top:795.5px;width:4000px;text-align:center;font-size:22px;line-height:22px;font-weight:400;color:#111111;font-family:'Liberation Sans', sans-serif;"><span id="t144" style="transform-origin:center;">Apr-26</span></div>
<div class="t" style="left:-2446.0px;top:795.5px;width:4000px;text-align:right;font-size:22px;line-height:22px;font-weight:400;color:#111111;font-family:'Liberation Sans', sans-serif;"><span id="t145" style="transform-origin:right;">12,000</span></div>
<div class="t" style="left:-330.5px;top:795.5px;width:4000px;text-align:center;font-size:22px;line-height:22px;font-weight:400;color:#111111;font-family:'Liberation Sans', sans-serif;"><span id="t146" style="transform-origin:center;">Yes</span></div>
<div class="t" style="left:-2070.0px;top:795.5px;width:4000px;text-align:right;font-size:22px;line-height:22px;font-weight:400;color:#111111;font-family:'Liberation Sans', sans-serif;"><span id="t147" style="transform-origin:right;">3,000</span></div>
<div class="t" style="left:-1901.0px;top:795.5px;width:4000px;text-align:right;font-size:22px;line-height:22px;font-weight:400;color:#111111;font-family:'Liberation Sans', sans-serif;"><span id="t148" style="transform-origin:right;">3,000</span></div>
<div class="t" style="left:-1732.0px;top:795.5px;width:4000px;text-align:right;font-size:22px;line-height:22px;font-weight:400;color:#111111;font-family:'Liberation Sans', sans-serif;"><span id="t149" style="transform-origin:right;">3,000</span></div>
<div class="t" style="left:-1563.0px;top:795.5px;width:4000px;text-align:right;font-size:22px;line-height:22px;font-weight:400;color:#111111;font-family:'Liberation Sans', sans-serif;"><span id="t150" style="transform-origin:right;">3,000</span></div>
<div style="left:2576.0px;top:806.6px;width:6.0px;height:2.0px;background:#111111;"></div>
<div style="left:2745.0px;top:806.6px;width:6.0px;height:2.0px;background:#111111;"></div>
<div class="t" style="left:140.5px;top:823.6px;width:4000px;text-align:left;font-size:22px;line-height:22px;font-weight:400;color:#111111;font-family:'Liberation Sans', sans-serif;"><span id="t151" style="transform-origin:left;transform:scaleX(1.0138)">Initial Inventory Stock</span></div>
<div class="t" style="left:-950.0px;top:823.6px;width:4000px;text-align:center;font-size:22px;line-height:22px;font-weight:400;color:#111111;font-family:'Liberation Sans', sans-serif;"><span id="t152" style="transform-origin:center;">May-26</span></div>
<div class="t" style="left:-744.0px;top:823.6px;width:4000px;text-align:center;font-size:22px;line-height:22px;font-weight:400;color:#111111;font-family:'Liberation Sans', sans-serif;"><span id="t153" style="transform-origin:center;">May-26</span></div>
<div class="t" style="left:-2446.0px;top:823.6px;width:4000px;text-align:right;font-size:22px;line-height:22px;font-weight:400;color:#111111;font-family:'Liberation Sans', sans-serif;"><span id="t154" style="transform-origin:right;">5,000</span></div>
<div class="t" style="left:-330.5px;top:823.6px;width:4000px;text-align:center;font-size:22px;line-height:22px;font-weight:400;color:#111111;font-family:'Liberation Sans', sans-serif;"><span id="t155" style="transform-origin:center;">Yes</span></div>
<div style="left:1900.0px;top:834.7px;width:6.0px;height:2.0px;background:#111111;"></div>
<div style="left:2069.0px;top:834.7px;width:6.0px;height:2.0px;background:#111111;"></div>
<div style="left:2238.0px;top:834.7px;width:6.0px;height:2.0px;background:#111111;"></div>
<div style="left:2407.0px;top:834.7px;width:6.0px;height:2.0px;background:#111111;"></div>
<div class="t" style="left:-1394.0px;top:823.6px;width:4000px;text-align:right;font-size:22px;line-height:22px;font-weight:400;color:#111111;font-family:'Liberation Sans', sans-serif;"><span id="t156" style="transform-origin:right;">5,000</span></div>
<div style="left:2745.0px;top:834.7px;width:6.0px;height:2.0px;background:#111111;"></div>
<div class="t" style="left:140.5px;top:851.6px;width:4000px;text-align:left;font-size:22px;line-height:22px;font-weight:400;color:#111111;font-family:'Liberation Sans', sans-serif;"><span id="t157" style="transform-origin:left;transform:scaleX(0.9820)">Delivery Vehicle</span></div>
<div class="t" style="left:-950.0px;top:851.6px;width:4000px;text-align:center;font-size:22px;line-height:22px;font-weight:400;color:#111111;font-family:'Liberation Sans', sans-serif;"><span id="t158" style="transform-origin:center;">Jun-26</span></div>
<div class="t" style="left:-744.0px;top:851.6px;width:4000px;text-align:center;font-size:22px;line-height:22px;font-weight:400;color:#111111;font-family:'Liberation Sans', sans-serif;"><span id="t159" style="transform-origin:center;">Jun-26</span></div>
<div class="t" style="left:-2446.0px;top:851.6px;width:4000px;text-align:right;font-size:22px;line-height:22px;font-weight:400;color:#111111;font-family:'Liberation Sans', sans-serif;"><span id="t160" style="transform-origin:right;">18,000</span></div>
<div class="t" style="left:-330.5px;top:851.6px;width:4000px;text-align:center;font-size:22px;line-height:22px;font-weight:400;color:#111111;font-family:'Liberation Sans', sans-serif;"><span id="t161" style="transform-origin:center;">Yes</span></div>
<div style="left:1900.0px;top:862.7px;width:6.0px;height:2.0px;background:#111111;"></div>
<div style="left:2069.0px;top:862.7px;width:6.0px;height:2.0px;background:#111111;"></div>
<div style="left:2238.0px;top:862.7px;width:6.0px;height:2.0px;background:#111111;"></div>
<div style="left:2407.0px;top:862.7px;width:6.0px;height:2.0px;background:#111111;"></div>
<div style="left:2576.0px;top:862.7px;width:6.0px;height:2.0px;background:#111111;"></div>
<div class="t" style="left:-1225.0px;top:851.6px;width:4000px;text-align:right;font-size:22px;line-height:22px;font-weight:400;color:#111111;font-family:'Liberation Sans', sans-serif;"><span id="t162" style="transform-origin:right;">18,000</span></div>
<div class="t" style="left:140.5px;top:879.6px;width:4000px;text-align:left;font-size:22px;line-height:22px;font-weight:400;color:#111111;font-family:'Liberation Sans', sans-serif;"><span id="t163" style="transform-origin:left;transform:scaleX(0.9708)">Exterior Signage</span></div>
<div class="t" style="left:-950.0px;top:879.6px;width:4000px;text-align:center;font-size:22px;line-height:22px;font-weight:400;color:#111111;font-family:'Liberation Sans', sans-serif;"><span id="t164" style="transform-origin:center;">Apr-26</span></div>
<div class="t" style="left:-744.0px;top:879.6px;width:4000px;text-align:center;font-size:22px;line-height:22px;font-weight:400;color:#111111;font-family:'Liberation Sans', sans-serif;"><span id="t165" style="transform-origin:center;">Apr-26</span></div>
<div class="t" style="left:-2446.0px;top:879.6px;width:4000px;text-align:right;font-size:22px;line-height:22px;font-weight:400;color:#111111;font-family:'Liberation Sans', sans-serif;"><span id="t166" style="transform-origin:right;">3,000</span></div>
<div class="t" style="left:-330.5px;top:879.6px;width:4000px;text-align:center;font-size:22px;line-height:22px;font-weight:400;color:#111111;font-family:'Liberation Sans', sans-serif;"><span id="t167" style="transform-origin:center;">Yes</span></div>
<div style="left:1900.0px;top:890.7px;width:6.0px;height:2.0px;background:#111111;"></div>
<div style="left:2069.0px;top:890.7px;width:6.0px;height:2.0px;background:#111111;"></div>
<div style="left:2238.0px;top:890.7px;width:6.0px;height:2.0px;background:#111111;"></div>
<div class="t" style="left:-1563.0px;top:879.6px;width:4000px;text-align:right;font-size:22px;line-height:22px;font-weight:400;color:#111111;font-family:'Liberation Sans', sans-serif;"><span id="t168" style="transform-origin:right;">3,000</span></div>
<div style="left:2576.0px;top:890.7px;width:6.0px;height:2.0px;background:#111111;"></div>
<div style="left:2745.0px;top:890.7px;width:6.0px;height:2.0px;background:#111111;"></div>
<div style="left:142.0px;top:917.8px;width:6.0px;height:2.0px;background:#111111;"></div>
<div class="t" style="left:-330.5px;top:907.6px;width:4000px;text-align:center;font-size:22px;line-height:22px;font-weight:400;color:#111111;font-family:'Liberation Sans', sans-serif;"><span id="t169" style="transform-origin:center;">Yes</span></div>
<div style="left:1900.0px;top:918.8px;width:6.0px;height:2.0px;background:#111111;"></div>
<div style="left:2069.0px;top:918.8px;width:6.0px;height:2.0px;background:#111111;"></div>
<div style="left:2238.0px;top:918.8px;width:6.0px;height:2.0px;background:#111111;"></div>
<div style="left:2407.0px;top:918.8px;width:6.0px;height:2.0px;background:#111111;"></div>
<div style="left:2576.0px;top:918.8px;width:6.0px;height:2.0px;background:#111111;"></div>
<div style="left:2745.0px;top:918.8px;width:6.0px;height:2.0px;background:#111111;"></div>
<div style="left:142.0px;top:945.8px;width:6.0px;height:2.0px;background:#111111;"></div>
<div class="t" style="left:-330.5px;top:935.7px;width:4000px;text-align:center;font-size:22px;line-height:22px;font-weight:400;color:#111111;font-family:'Liberation Sans', sans-serif;"><span id="t170" style="transform-origin:center;">Yes</span></div>
<div style="left:1900.0px;top:946.8px;width:6.0px;height:2.0px;background:#111111;"></div>
<div style="left:2069.0px;top:946.8px;width:6.0px;height:2.0px;background:#111111;"></div>
<div style="left:2238.0px;top:946.8px;width:6.0px;height:2.0px;background:#111111;"></div>
<div style="left:2407.0px;top:946.8px;width:6.0px;height:2.0px;background:#111111;"></div>
<div style="left:2576.0px;top:946.8px;width:6.0px;height:2.0px;background:#111111;"></div>
<div style="left:2745.0px;top:946.8px;width:6.0px;height:2.0px;background:#111111;"></div>
<div style="left:142.0px;top:973.8px;width:6.0px;height:2.0px;background:#111111;"></div>
<div class="t" style="left:-330.5px;top:963.7px;width:4000px;text-align:center;font-size:22px;line-height:22px;font-weight:400;color:#111111;font-family:'Liberation Sans', sans-serif;"><span id="t171" style="transform-origin:center;">Yes</span></div>
<div style="left:1900.0px;top:974.8px;width:6.0px;height:2.0px;background:#111111;"></div>
<div style="left:2069.0px;top:974.8px;width:6.0px;height:2.0px;background:#111111;"></div>
<div style="left:2238.0px;top:974.8px;width:6.0px;height:2.0px;background:#111111;"></div>
<div style="left:2407.0px;top:974.8px;width:6.0px;height:2.0px;background:#111111;"></div>
<div style="left:2576.0px;top:974.8px;width:6.0px;height:2.0px;background:#111111;"></div>
<div style="left:2745.0px;top:974.8px;width:6.0px;height:2.0px;background:#111111;"></div>
<div style="left:142.0px;top:1001.9px;width:6.0px;height:2.0px;background:#111111;"></div>
<div class="t" style="left:-330.5px;top:991.7px;width:4000px;text-align:center;font-size:22px;line-height:22px;font-weight:400;color:#111111;font-family:'Liberation Sans', sans-serif;"><span id="t172" style="transform-origin:center;">Yes</span></div>
<div style="left:1900.0px;top:1002.9px;width:6.0px;height:2.0px;background:#111111;"></div>
<div style="left:2069.0px;top:1002.9px;width:6.0px;height:2.0px;background:#111111;"></div>
<div style="left:2238.0px;top:1002.9px;width:6.0px;height:2.0px;background:#111111;"></div>
<div style="left:2407.0px;top:1002.9px;width:6.0px;height:2.0px;background:#111111;"></div>
<div style="left:2576.0px;top:1002.9px;width:6.0px;height:2.0px;background:#111111;"></div>
<div style="left:2745.0px;top:1002.9px;width:6.0px;height:2.0px;background:#111111;"></div>
<div style="left:142.0px;top:1029.9px;width:6.0px;height:2.0px;background:#111111;"></div>
<div class="t" style="left:-330.5px;top:1019.8px;width:4000px;text-align:center;font-size:22px;line-height:22px;font-weight:400;color:#111111;font-family:'Liberation Sans', sans-serif;"><span id="t173" style="transform-origin:center;">Yes</span></div>
<div style="left:1900.0px;top:1030.9px;width:6.0px;height:2.0px;background:#111111;"></div>
<div style="left:2069.0px;top:1030.9px;width:6.0px;height:2.0px;background:#111111;"></div>
<div style="left:2238.0px;top:1030.9px;width:6.0px;height:2.0px;background:#111111;"></div>
<div style="left:2407.0px;top:1030.9px;width:6.0px;height:2.0px;background:#111111;"></div>
<div style="left:2576.0px;top:1030.9px;width:6.0px;height:2.0px;background:#111111;"></div>
<div style="left:2745.0px;top:1030.9px;width:6.0px;height:2.0px;background:#111111;"></div>
<div style="left:142.0px;top:1057.9px;width:6.0px;height:2.0px;background:#111111;"></div>
<div class="t" style="left:-330.5px;top:1047.8px;width:4000px;text-align:center;font-size:22px;line-height:22px;font-weight:400;color:#111111;font-family:'Liberation Sans', sans-serif;"><span id="t174" style="transform-origin:center;">Yes</span></div>
<div style="left:1900.0px;top:1058.9px;width:6.0px;height:2.0px;background:#111111;"></div>
<div style="left:2069.0px;top:1058.9px;width:6.0px;height:2.0px;background:#111111;"></div>
<div style="left:2238.0px;top:1058.9px;width:6.0px;height:2.0px;background:#111111;"></div>
<div style="left:2407.0px;top:1058.9px;width:6.0px;height:2.0px;background:#111111;"></div>
<div style="left:2576.0px;top:1058.9px;width:6.0px;height:2.0px;background:#111111;"></div>
<div style="left:2745.0px;top:1058.9px;width:6.0px;height:2.0px;background:#111111;"></div>
<div style="left:142.0px;top:1086.0px;width:6.0px;height:2.0px;background:#111111;"></div>
<div class="t" style="left:-330.5px;top:1075.8px;width:4000px;text-align:center;font-size:22px;line-height:22px;font-weight:400;color:#111111;font-family:'Liberation Sans', sans-serif;"><span id="t175" style="transform-origin:center;">Yes</span></div>
<div style="left:1900.0px;top:1087.0px;width:6.0px;height:2.0px;background:#111111;"></div>
<div style="left:2069.0px;top:1087.0px;width:6.0px;height:2.0px;background:#111111;"></div>
<div style="left:2238.0px;top:1087.0px;width:6.0px;height:2.0px;background:#111111;"></div>
<div style="left:2407.0px;top:1087.0px;width:6.0px;height:2.0px;background:#111111;"></div>
<div style="left:2576.0px;top:1087.0px;width:6.0px;height:2.0px;background:#111111;"></div>
<div style="left:2745.0px;top:1087.0px;width:6.0px;height:2.0px;background:#111111;"></div>
<div style="left:142.0px;top:1114.0px;width:6.0px;height:2.0px;background:#111111;"></div>
<div class="t" style="left:-330.5px;top:1103.9px;width:4000px;text-align:center;font-size:22px;line-height:22px;font-weight:400;color:#111111;font-family:'Liberation Sans', sans-serif;"><span id="t176" style="transform-origin:center;">Yes</span></div>
<div style="left:1900.0px;top:1115.0px;width:6.0px;height:2.0px;background:#111111;"></div>
<div style="left:2069.0px;top:1115.0px;width:6.0px;height:2.0px;background:#111111;"></div>
<div style="left:2238.0px;top:1115.0px;width:6.0px;height:2.0px;background:#111111;"></div>
<div style="left:2407.0px;top:1115.0px;width:6.0px;height:2.0px;background:#111111;"></div>
<div style="left:2576.0px;top:1115.0px;width:6.0px;height:2.0px;background:#111111;"></div>
<div style="left:2745.0px;top:1115.0px;width:6.0px;height:2.0px;background:#111111;"></div>
<div style="left:142.0px;top:1142.0px;width:6.0px;height:2.0px;background:#111111;"></div>
<div class="t" style="left:-330.5px;top:1131.9px;width:4000px;text-align:center;font-size:22px;line-height:22px;font-weight:400;color:#111111;font-family:'Liberation Sans', sans-serif;"><span id="t177" style="transform-origin:center;">Yes</span></div>
<div style="left:1900.0px;top:1143.0px;width:6.0px;height:2.0px;background:#111111;"></div>
<div style="left:2069.0px;top:1143.0px;width:6.0px;height:2.0px;background:#111111;"></div>
<div style="left:2238.0px;top:1143.0px;width:6.0px;height:2.0px;background:#111111;"></div>
<div style="left:2407.0px;top:1143.0px;width:6.0px;height:2.0px;background:#111111;"></div>
<div style="left:2576.0px;top:1143.0px;width:6.0px;height:2.0px;background:#111111;"></div>
<div style="left:2745.0px;top:1143.0px;width:6.0px;height:2.0px;background:#111111;"></div>
<div style="left:142.0px;top:1170.0px;width:6.0px;height:2.0px;background:#111111;"></div>
<div class="t" style="left:-330.5px;top:1159.9px;width:4000px;text-align:center;font-size:22px;line-height:22px;font-weight:400;color:#111111;font-family:'Liberation Sans', sans-serif;"><span id="t178" style="transform-origin:center;">Yes</span></div>
<div style="left:1900.0px;top:1171.0px;width:6.0px;height:2.0px;background:#111111;"></div>
<div style="left:2069.0px;top:1171.0px;width:6.0px;height:2.0px;background:#111111;"></div>
<div style="left:2238.0px;top:1171.0px;width:6.0px;height:2.0px;background:#111111;"></div>
<div style="left:2407.0px;top:1171.0px;width:6.0px;height:2.0px;background:#111111;"></div>
<div style="left:2576.0px;top:1171.0px;width:6.0px;height:2.0px;background:#111111;"></div>
<div style="left:2745.0px;top:1171.0px;width:6.0px;height:2.0px;background:#111111;"></div>
<div style="left:142.0px;top:1198.1px;width:6.0px;height:2.0px;background:#111111;"></div>
<div class="t" style="left:-330.5px;top:1187.9px;width:4000px;text-align:center;font-size:22px;line-height:22px;font-weight:400;color:#111111;font-family:'Liberation Sans', sans-serif;"><span id="t179" style="transform-origin:center;">Yes</span></div>
<div style="left:1900.0px;top:1199.1px;width:6.0px;height:2.0px;background:#111111;"></div>
<div style="left:2069.0px;top:1199.1px;width:6.0px;height:2.0px;background:#111111;"></div>
<div style="left:2238.0px;top:1199.1px;width:6.0px;height:2.0px;background:#111111;"></div>
<div style="left:2407.0px;top:1199.1px;width:6.0px;height:2.0px;background:#111111;"></div>
<div style="left:2576.0px;top:1199.1px;width:6.0px;height:2.0px;background:#111111;"></div>
<div style="left:2745.0px;top:1199.1px;width:6.0px;height:2.0px;background:#111111;"></div>
<div style="left:137.0px;top:1212.6px;width:2723.0px;height:35.0px;background:#4cb2e6;"></div>
<div class="t" style="left:143.9px;top:1216.7px;width:4000px;text-align:left;font-size:27.5px;line-height:27.5px;font-weight:700;color:#ffffff;font-family:'Liberation Sans', sans-serif;;-webkit-text-stroke:0.69px #ffffff"><span id="t180" style="transform-origin:left;transform:scaleX(1.0934)">Total</span></div>
<div class="t" style="left:-2448.2px;top:1219.9px;width:4000px;text-align:right;font-size:22px;line-height:22px;font-weight:700;color:#ffffff;font-family:'Liberation Sans', sans-serif;;-webkit-text-stroke:0.55px #ffffff"><span id="t181" style="transform-origin:right;transform:scaleX(1.1316)">136,000</span></div>
<div class="t" style="left:-2072.5px;top:1219.9px;width:4000px;text-align:right;font-size:22px;line-height:22px;font-weight:700;color:#ffffff;font-family:'Liberation Sans', sans-serif;;-webkit-text-stroke:0.55px #ffffff"><span id="t182" style="transform-origin:right;transform:scaleX(1.1335)">32,333</span></div>
<div class="t" style="left:-1903.5px;top:1219.9px;width:4000px;text-align:right;font-size:22px;line-height:22px;font-weight:700;color:#ffffff;font-family:'Liberation Sans', sans-serif;;-webkit-text-stroke:0.55px #ffffff"><span id="t183" style="transform-origin:right;transform:scaleX(1.1335)">32,333</span></div>
<div class="t" style="left:-1734.5px;top:1219.9px;width:4000px;text-align:right;font-size:22px;line-height:22px;font-weight:700;color:#ffffff;font-family:'Liberation Sans', sans-serif;;-webkit-text-stroke:0.55px #ffffff"><span id="t184" style="transform-origin:right;transform:scaleX(1.1335)">32,333</span></div>
<div class="t" style="left:-1565.5px;top:1219.9px;width:4000px;text-align:right;font-size:22px;line-height:22px;font-weight:700;color:#ffffff;font-family:'Liberation Sans', sans-serif;;-webkit-text-stroke:0.55px #ffffff"><span id="t185" style="transform-origin:right;transform:scaleX(1.1335)">16,000</span></div>
<div class="t" style="left:-1396.5px;top:1219.9px;width:4000px;text-align:right;font-size:22px;line-height:22px;font-weight:700;color:#ffffff;font-family:'Liberation Sans', sans-serif;;-webkit-text-stroke:0.55px #ffffff"><span id="t186" style="transform-origin:right;transform:scaleX(1.1366)">5,000</span></div>
<div class="t" style="left:-1227.5px;top:1219.9px;width:4000px;text-align:right;font-size:22px;line-height:22px;font-weight:700;color:#ffffff;font-family:'Liberation Sans', sans-serif;;-webkit-text-stroke:0.55px #ffffff"><span id="t187" style="transform-origin:right;transform:scaleX(1.1335)">18,000</span></div>
<div class="t" style="left:95.0px;top:1306.6px;width:4000px;text-align:left;font-size:40px;line-height:40px;font-weight:700;color:#222222;font-family:'Liberation Sans', sans-serif;;-webkit-text-stroke:1.00px #222222"><span id="t188" style="transform-origin:left;transform:scaleX(1.0212)">Startup Costs Depreciation, $</span></div>
<div style="left:137.0px;top:1373.0px;width:2723.0px;height:28.0px;background:#4cb2e6;"></div>
<div class="t" style="left:142.5px;top:1376.9px;width:4000px;text-align:left;font-size:22px;line-height:22px;font-weight:700;color:#ffffff;font-family:'Liberation Sans', sans-serif;;-webkit-text-stroke:0.55px #ffffff"><span id="t189" style="transform-origin:left;transform:scaleX(1.0451)">Opening Net Book Value</span></div>
<div style="left:1892.0px;top:1386.8px;width:8.0px;height:3.0px;background:#ffffff;"></div>
<div class="t" style="left:-1903.5px;top:1376.9px;width:4000px;text-align:right;font-size:22px;line-height:22px;font-weight:700;color:#ffffff;font-family:'Liberation Sans', sans-serif;;-webkit-text-stroke:0.55px #ffffff"><span id="t190" style="transform-origin:right;transform:scaleX(1.1335)">32,064</span></div>
<div class="t" style="left:-1734.5px;top:1376.9px;width:4000px;text-align:right;font-size:22px;line-height:22px;font-weight:700;color:#ffffff;font-family:'Liberation Sans', sans-serif;;-webkit-text-stroke:0.55px #ffffff"><span id="t191" style="transform-origin:right;transform:scaleX(1.1335)">63,858</span></div>
<div class="t" style="left:-1565.5px;top:1376.9px;width:4000px;text-align:right;font-size:22px;line-height:22px;font-weight:700;color:#ffffff;font-family:'Liberation Sans', sans-serif;;-webkit-text-stroke:0.55px #ffffff"><span id="t192" style="transform-origin:right;transform:scaleX(1.1335)">95,383</span></div>
<div class="t" style="left:-1396.5px;top:1376.9px;width:4000px;text-align:right;font-size:22px;line-height:22px;font-weight:700;color:#ffffff;font-family:'Liberation Sans', sans-serif;;-webkit-text-stroke:0.55px #ffffff"><span id="t193" style="transform-origin:right;transform:scaleX(1.1490)">110,442</span></div>
<div class="t" style="left:-1227.5px;top:1376.9px;width:4000px;text-align:right;font-size:22px;line-height:22px;font-weight:700;color:#ffffff;font-family:'Liberation Sans', sans-serif;;-webkit-text-stroke:0.55px #ffffff"><span id="t194" style="transform-origin:right;transform:scaleX(1.1490)">114,458</span></div>
<div class="t" style="left:-1058.5px;top:1376.9px;width:4000px;text-align:right;font-size:22px;line-height:22px;font-weight:700;color:#ffffff;font-family:'Liberation Sans', sans-serif;;-webkit-text-stroke:0.55px #ffffff"><span id="t195" style="transform-origin:right;transform:scaleX(1.1313)">131,325</span></div>
<div class="t" style="left:162.0px;top:1404.4px;width:4000px;text-align:left;font-size:22px;line-height:22px;font-weight:400;color:#111111;font-family:'Liberation Sans', sans-serif;"><span id="t196" style="transform-origin:left;transform:scaleX(0.9924)">Expenditure - Amortizable</span></div>
<div style="left:1731.0px;top:1415.5px;width:6.0px;height:2.0px;background:#111111;"></div>
<div class="t" style="left:-2070.0px;top:1404.4px;width:4000px;text-align:right;font-size:22px;line-height:22px;font-weight:400;color:#111111;font-family:'Liberation Sans', sans-serif;"><span id="t197" style="transform-origin:right;">32,333</span></div>
<div class="t" style="left:-1901.0px;top:1404.4px;width:4000px;text-align:right;font-size:22px;line-height:22px;font-weight:400;color:#111111;font-family:'Liberation Sans', sans-serif;"><span id="t198" style="transform-origin:right;">32,333</span></div>
<div class="t" style="left:-1732.0px;top:1404.4px;width:4000px;text-align:right;font-size:22px;line-height:22px;font-weight:400;color:#111111;font-family:'Liberation Sans', sans-serif;"><span id="t199" style="transform-origin:right;">32,333</span></div>
<div class="t" style="left:-1563.0px;top:1404.4px;width:4000px;text-align:right;font-size:22px;line-height:22px;font-weight:400;color:#111111;font-family:'Liberation Sans', sans-serif;"><span id="t200" style="transform-origin:right;">16,000</span></div>
<div class="t" style="left:-1394.0px;top:1404.4px;width:4000px;text-align:right;font-size:22px;line-height:22px;font-weight:400;color:#111111;font-family:'Liberation Sans', sans-serif;"><span id="t201" style="transform-origin:right;">5,000</span></div>
<div class="t" style="left:-1225.0px;top:1404.4px;width:4000px;text-align:right;font-size:22px;line-height:22px;font-weight:400;color:#111111;font-family:'Liberation Sans', sans-serif;"><span id="t202" style="transform-origin:right;">18,000</span></div>
<div class="t" style="left:162.0px;top:1432.6px;width:4000px;text-align:left;font-size:22px;line-height:22px;font-weight:400;color:#111111;font-family:'Liberation Sans', sans-serif;"><span id="t203" style="transform-origin:left;transform:scaleX(1.0005)">Depreciation (Depreciation Period (Years) - 10)</span></div>
<div class="t" style="left:-2070.0px;top:1432.6px;width:4000px;text-align:right;font-size:22px;line-height:22px;font-weight:400;color:#111111;font-family:'Liberation Sans', sans-serif;"><span id="t204" style="transform-origin:right;">269</span></div>
<div class="t" style="left:-1901.0px;top:1432.6px;width:4000px;text-align:right;font-size:22px;line-height:22px;font-weight:400;color:#111111;font-family:'Liberation Sans', sans-serif;"><span id="t205" style="transform-origin:right;">539</span></div>
<div class="t" style="left:-1732.0px;top:1432.6px;width:4000px;text-align:right;font-size:22px;line-height:22px;font-weight:400;color:#111111;font-family:'Liberation Sans', sans-serif;"><span id="t206" style="transform-origin:right;">808</span></div>
<div class="t" style="left:-1563.0px;top:1432.6px;width:4000px;text-align:right;font-size:22px;line-height:22px;font-weight:400;color:#111111;font-family:'Liberation Sans', sans-serif;"><span id="t207" style="transform-origin:right;">942</span></div>
<div class="t" style="left:-1394.0px;top:1432.6px;width:4000px;text-align:right;font-size:22px;line-height:22px;font-weight:400;color:#111111;font-family:'Liberation Sans', sans-serif;"><span id="t208" style="transform-origin:right;">983</span></div>
<div class="t" style="left:-1225.0px;top:1432.6px;width:4000px;text-align:right;font-size:22px;line-height:22px;font-weight:400;color:#111111;font-family:'Liberation Sans', sans-serif;"><span id="t209" style="transform-origin:right;">1,133</span></div>
<div style="left:137.0px;top:1457.2px;width:2723.0px;height:28.1px;background:#4cb2e6;"></div>
<div class="t" style="left:142.5px;top:1461.2px;width:4000px;text-align:left;font-size:22px;line-height:22px;font-weight:700;color:#ffffff;font-family:'Liberation Sans', sans-serif;;-webkit-text-stroke:0.55px #ffffff"><span id="t210" style="transform-origin:left;transform:scaleX(1.0379)">Closing Net Book Value</span></div>
<div style="left:1723.0px;top:1471.1px;width:8.0px;height:3.0px;background:#ffffff;"></div>
<div class="t" style="left:-2072.5px;top:1461.2px;width:4000px;text-align:right;font-size:22px;line-height:22px;font-weight:700;color:#ffffff;font-family:'Liberation Sans', sans-serif;;-webkit-text-stroke:0.55px #ffffff"><span id="t211" style="transform-origin:right;transform:scaleX(1.1335)">32,064</span></div>
<div class="t" style="left:-1903.5px;top:1461.2px;width:4000px;text-align:right;font-size:22px;line-height:22px;font-weight:700;color:#ffffff;font-family:'Liberation Sans', sans-serif;;-webkit-text-stroke:0.55px #ffffff"><span id="t212" style="transform-origin:right;transform:scaleX(1.1335)">63,858</span></div>
<div class="t" style="left:-1734.5px;top:1461.2px;width:4000px;text-align:right;font-size:22px;line-height:22px;font-weight:700;color:#ffffff;font-family:'Liberation Sans', sans-serif;;-webkit-text-stroke:0.55px #ffffff"><span id="t213" style="transform-origin:right;transform:scaleX(1.1335)">95,383</span></div>
<div class="t" style="left:-1565.5px;top:1461.2px;width:4000px;text-align:right;font-size:22px;line-height:22px;font-weight:700;color:#ffffff;font-family:'Liberation Sans', sans-serif;;-webkit-text-stroke:0.55px #ffffff"><span id="t214" style="transform-origin:right;transform:scaleX(1.1490)">110,442</span></div>
<div class="t" style="left:-1396.5px;top:1461.2px;width:4000px;text-align:right;font-size:22px;line-height:22px;font-weight:700;color:#ffffff;font-family:'Liberation Sans', sans-serif;;-webkit-text-stroke:0.55px #ffffff"><span id="t215" style="transform-origin:right;transform:scaleX(1.1490)">114,458</span></div>
<div class="t" style="left:-1227.5px;top:1461.2px;width:4000px;text-align:right;font-size:22px;line-height:22px;font-weight:700;color:#ffffff;font-family:'Liberation Sans', sans-serif;;-webkit-text-stroke:0.55px #ffffff"><span id="t216" style="transform-origin:right;transform:scaleX(1.1313)">131,325</span></div>
<div class="t" style="left:-1058.5px;top:1461.2px;width:4000px;text-align:right;font-size:22px;line-height:22px;font-weight:700;color:#ffffff;font-family:'Liberation Sans', sans-serif;;-webkit-text-stroke:0.55px #ffffff"><span id="t217" style="transform-origin:right;transform:scaleX(1.1313)">148,192</span></div>
<div style="left:137.0px;top:1527.4px;width:2723.0px;height:27.6px;background:#4cb2e6;"></div>
<div class="t" style="left:142.5px;top:1530.9px;width:4000px;text-align:left;font-size:22px;line-height:22px;font-weight:700;color:#ffffff;font-family:'Liberation Sans', sans-serif;;-webkit-text-stroke:0.55px #ffffff"><span id="t218" style="transform-origin:left;transform:scaleX(1.0451)">Opening Net Book Value</span></div>
<div style="left:1892.0px;top:1540.8px;width:8.0px;height:3.0px;background:#ffffff;"></div>
<div style="left:2061.0px;top:1540.8px;width:8.0px;height:3.0px;background:#ffffff;"></div>
<div style="left:2230.0px;top:1540.8px;width:8.0px;height:3.0px;background:#ffffff;"></div>
<div style="left:2399.0px;top:1540.8px;width:8.0px;height:3.0px;background:#ffffff;"></div>
<div style="left:2568.0px;top:1540.8px;width:8.0px;height:3.0px;background:#ffffff;"></div>
<div style="left:2737.0px;top:1540.8px;width:8.0px;height:3.0px;background:#ffffff;"></div>
<div class="t" style="left:162.0px;top:1558.4px;width:4000px;text-align:left;font-size:22px;line-height:22px;font-weight:400;color:#111111;font-family:'Liberation Sans', sans-serif;"><span id="t219" style="transform-origin:left;transform:scaleX(0.9893)">Expenditure - Non-Amortizable</span></div>
<div style="left:1900.0px;top:1569.5px;width:6.0px;height:2.0px;background:#111111;"></div>
<div style="left:2069.0px;top:1569.5px;width:6.0px;height:2.0px;background:#111111;"></div>
<div style="left:2238.0px;top:1569.5px;width:6.0px;height:2.0px;background:#111111;"></div>
<div style="left:2407.0px;top:1569.5px;width:6.0px;height:2.0px;background:#111111;"></div>
<div style="left:2576.0px;top:1569.5px;width:6.0px;height:2.0px;background:#111111;"></div>
<div style="left:2745.0px;top:1569.5px;width:6.0px;height:2.0px;background:#111111;"></div>
<div style="left:137.0px;top:1583.0px;width:2723.0px;height:28.2px;background:#4cb2e6;"></div>
<div class="t" style="left:142.5px;top:1587.1px;width:4000px;text-align:left;font-size:22px;line-height:22px;font-weight:700;color:#ffffff;font-family:'Liberation Sans', sans-serif;;-webkit-text-stroke:0.55px #ffffff"><span id="t220" style="transform-origin:left;transform:scaleX(1.0379)">Closing Net Book Value</span></div>
<div style="left:1892.0px;top:1597.0px;width:8.0px;height:3.0px;background:#ffffff;"></div>
<div style="left:2061.0px;top:1597.0px;width:8.0px;height:3.0px;background:#ffffff;"></div>
<div style="left:2230.0px;top:1597.0px;width:8.0px;height:3.0px;background:#ffffff;"></div>
<div style="left:2399.0px;top:1597.0px;width:8.0px;height:3.0px;background:#ffffff;"></div>
<div style="left:2568.0px;top:1597.0px;width:8.0px;height:3.0px;background:#ffffff;"></div>
<div style="left:2737.0px;top:1597.0px;width:8.0px;height:3.0px;background:#ffffff;"></div>
<div style="left:1772.5px;top:305.0px;width:1.2px;height:1365.0px;background:#a8a8a8;"></div>
<div style="left:2860.0px;top:278.0px;width:30.0px;height:1392.0px;background:#0f0f0f;"></div>
<div style="left:2863.0px;top:279.0px;width:25.0px;height:1391.0px;background:#151515;border-radius:12px"></div>
<svg style="position:absolute;left:2869.0px;top:286.0px;overflow:visible;" width="14" height="10" viewBox="0 0 14 10"><path d="M7 0.5 L13.5 9.5 H0.5 Z" fill="#9d9d9d" stroke="#9d9d9d" stroke-width="1" stroke-linejoin="round"/></svg>
<div style="left:2870.0px;top:304.0px;width:12.0px;height:1310.0px;background:#9d9d9d;border-radius:6px"></div>
<svg style="position:absolute;left:2869.0px;top:1654.0px;overflow:visible;" width="14" height="10" viewBox="0 0 14 10"><path d="M7 9.5 L13.5 0.5 H0.5 Z" fill="#9d9d9d" stroke="#9d9d9d" stroke-width="1" stroke-linejoin="round"/></svg>
<div style="left:23.0px;top:128.0px;width:2855.0px;height:149.5px;background:#292929;border-radius:9px"></div>
<svg style="position:absolute;left:55.0px;top:141.0px;overflow:visible;" width="42" height="46" viewBox="0 0 42 46">
<path d="M1.5 7 H8 M1.5 7 V41 H21" stroke="#8a8a8a" stroke-width="2.6" fill="none"/>
<path d="M25 7 H31 V18" stroke="#8a8a8a" stroke-width="2.6" fill="none"/>
<path d="M7.5 11 V5 H12 Q12 0.8 16.5 0.8 Q21 0.8 21 5 H25.5 V11 Z" stroke="#8a8a8a" stroke-width="2" fill="none" stroke-linejoin="round"/>
<rect x="21" y="18.5" width="19.5" height="26" stroke="#8a8a8a" stroke-width="2" fill="none"/></svg>
<div class="t" style="left:52.0px;top:195.4px;width:4000px;text-align:left;font-size:18px;line-height:18px;font-weight:400;color:#707070;font-family:'Liberation Sans', sans-serif;"><span id="t221" style="transform-origin:left;transform:scaleX(0.8755)">Paste</span></div>
<svg style="position:absolute;left:66.0px;top:223.6px;overflow:visible;" width="11" height="6.5" viewBox="0 0 11 6.5"><path d="M1 1 L5.5 5.5 L10 1" stroke="#707070" stroke-width="2.0" fill="none" stroke-linecap="round" stroke-linejoin="round"/></svg>
<svg style="position:absolute;left:113.0px;top:139.0px;overflow:visible;" width="24" height="27" viewBox="0 0 24 27">
<path d="M6.5 18 L16 1 M17.5 18 L8 1" stroke="#d6d6d6" stroke-width="1.3" fill="none"/>
<circle cx="6.5" cy="22" r="3.6" stroke="#4aa3e6" stroke-width="2" fill="none"/>
<circle cx="15.5" cy="22" r="3.6" stroke="#4aa3e6" stroke-width="2" fill="none"/></svg>
<div class="t" style="left:142.4px;top:144.6px;width:4000px;text-align:left;font-size:17.5px;line-height:17.5px;font-weight:400;color:#f2f2f2;font-family:'Liberation Sans', sans-serif;"><span id="t222" style="transform-origin:left;transform:scaleX(0.9767)">Cut</span></div>
<svg style="position:absolute;left:111.0px;top:178.0px;overflow:visible;" width="27" height="27" viewBox="0 0 27 27">
<path d="M1 22 V1 H9 L12 4" stroke="#d6d6d6" stroke-width="1.6" fill="none"/>
<path d="M9 7 H19 L25 13 V25 H9 Z M19 7 V13 H25" stroke="#d6d6d6" stroke-width="1.6" fill="none" stroke-linejoin="round"/>
<path d="M12.5 17.5 H21 M12.5 21 H21" stroke="#d6d6d6" stroke-width="1.5"/></svg>
<div class="t" style="left:142.4px;top:183.6px;width:4000px;text-align:left;font-size:17.5px;line-height:17.5px;font-weight:400;color:#f2f2f2;font-family:'Liberation Sans', sans-serif;"><span id="t223" style="transform-origin:left;transform:scaleX(1.0034)">Copy</span></div>
<svg style="position:absolute;left:210.2px;top:188.2px;overflow:visible;" width="10.5" height="6.5" viewBox="0 0 10.5 6.5"><path d="M1 1 L5.25 5.5 L9.5 1" stroke="#e8e8e8" stroke-width="2.0" fill="none" stroke-linecap="round" stroke-linejoin="round"/></svg>
<svg style="position:absolute;left:111.0px;top:217.0px;overflow:visible;" width="27" height="25" viewBox="0 0 27 25">
<path d="M1.5 10.5 L14 4.5 L21 13 L8 23 Z" stroke="#f0c070" stroke-width="1.7" fill="none" stroke-linejoin="round"/>
<path d="M3.5 14.5 L17 14.5 L8 22 Z" fill="#e8a030"/>
<path d="M14 4.5 L18 8.5 L24.5 2 Q25.5 1 24 0.5 L22.5 0.5 L17.5 6" stroke="#e6e6e6" stroke-width="1.7" fill="none"/>
<path d="M15.5 6 L20.5 11" stroke="#e6e6e6" stroke-width="1.7"/></svg>
<div class="t" style="left:142.7px;top:223.2px;width:4000px;text-align:left;font-size:17.5px;line-height:17.5px;font-weight:400;color:#f2f2f2;font-family:'Liberation Sans', sans-serif;"><span id="t224" style="transform-origin:left;transform:scaleX(0.9867)">Format Painter</span></div>
<div class="t" style="left:109.7px;top:253.3px;width:4000px;text-align:left;font-size:17.5px;line-height:17.5px;font-weight:400;color:#f2f2f2;font-family:'Liberation Sans', sans-serif;"><span id="t225" style="transform-origin:left;transform:scaleX(0.9011)">Clipboard</span></div>
<svg style="position:absolute;left:265.0px;top:257.0px;overflow:visible;" width="13" height="12" viewBox="0 0 13 12"><path d="M1 11 V1 H12" stroke="#f2f2f2" stroke-width="1.4" fill="none"/><path d="M4 4 L11 11 M11 5.5 V11 H5.5" stroke="#f2f2f2" stroke-width="1.4" fill="none"/></svg>
<div style="left:282.3px;top:135.0px;width:1.0px;height:134.0px;background:#575757;"></div>
<div style="left:295.0px;top:146.2px;width:181.0px;height:35.6px;background:transparent;border:1.3px solid #747474;border-radius:6px"></div>
<div class="t" style="left:298.7px;top:156.8px;width:4000px;text-align:left;font-size:17.5px;line-height:17.5px;font-weight:400;color:#f2f2f2;font-family:'Liberation Sans', sans-serif;"><span id="t226" style="transform-origin:left;transform:scaleX(1.0070)">Tahoma</span></div>
<svg style="position:absolute;left:462.0px;top:160.7px;overflow:visible;" width="10.6" height="7.2" viewBox="0 0 10.6 7.2"><path d="M1 1 L5.3 6.2 L9.6 1" stroke="#e8e8e8" stroke-width="2.0" fill="none" stroke-linecap="round" stroke-linejoin="round"/></svg>
<div style="left:479.5px;top:146.2px;width:64.1px;height:35.6px;background:transparent;border:1.3px solid #747474;border-radius:6px"></div>
<div class="t" style="left:481.7px;top:156.8px;width:4000px;text-align:left;font-size:17.5px;line-height:17.5px;font-weight:400;color:#f2f2f2;font-family:'Liberation Sans', sans-serif;"><span id="t227" style="transform-origin:left;transform:scaleX(0.9862)">8</span></div>
<svg style="position:absolute;left:529.7px;top:160.7px;overflow:visible;" width="10.6" height="7.2" viewBox="0 0 10.6 7.2"><path d="M1 1 L5.3 6.2 L9.6 1" stroke="#e8e8e8" stroke-width="2.0" fill="none" stroke-linecap="round" stroke-linejoin="round"/></svg>
<div class="t" style="left:-1437.3px;top:150.6px;width:4000px;text-align:center;font-size:26px;line-height:26px;font-weight:400;color:#d6d6d6;font-family:'Liberation Sans', sans-serif;"><span id="t228" style="transform-origin:center;transform:scaleX(0.9571)">A</span></div>
<svg style="position:absolute;left:568.5px;top:152.5px;overflow:visible;" width="10" height="7" viewBox="0 0 10 7"><path d="M1 5.5 L4.5 1.5 L8 5.5" stroke="#4aa3e6" stroke-width="1.7" fill="none"/></svg>
<div class="t" style="left:-1397.8px;top:155.2px;width:4000px;text-align:center;font-size:20.5px;line-height:20.5px;font-weight:400;color:#d6d6d6;font-family:'Liberation Sans', sans-serif;"><span id="t229" style="transform-origin:center;transform:scaleX(0.9863)">A</span></div>
<svg style="position:absolute;left:607.9px;top:152.5px;overflow:visible;" width="9" height="6" viewBox="0 0 9 6"><path d="M1 1 L4.5 5 L8 1" stroke="#4aa3e6" stroke-width="1.7" fill="none" stroke-linecap="round" stroke-linejoin="round"/></svg>
<div class="t" style="left:-1686.9px;top:201.8px;width:4000px;text-align:center;font-size:20px;line-height:20px;font-weight:700;color:#d6d6d6;font-family:'Liberation Sans', sans-serif;"><span id="t230" style="transform-origin:center;transform:scaleX(0.8026)">B</span></div>
<div class="t" style="left:-1648.2px;top:201.8px;width:4000px;text-align:center;font-size:20px;line-height:20px;font-weight:400;color:#d6d6d6;font-family:'Liberation Sans', sans-serif;font-style:italic;font-family:'Liberation Serif',serif"><span id="t231" style="transform-origin:center;transform:scaleX(1.4389)">I</span></div>
<div class="t" style="left:-1609.8px;top:201.0px;width:4000px;text-align:center;font-size:20px;line-height:20px;font-weight:400;color:#d6d6d6;font-family:'Liberation Sans', sans-serif;"><span id="t232" style="transform-origin:center;transform:scaleX(0.8649)">U</span></div>
<div style="left:383.0px;top:219.3px;width:14.4px;height:1.5px;background:#d6d6d6;"></div>
<svg style="position:absolute;left:413.7px;top:209.0px;overflow:visible;" width="10.9" height="7" viewBox="0 0 10.9 7"><path d="M1 1 L5.45 6 L9.9 1" stroke="#e8e8e8" stroke-width="2.0" fill="none" stroke-linecap="round" stroke-linejoin="round"/></svg>
<div style="left:434.3px;top:194.0px;width:1.0px;height:36.0px;background:#575757;"></div>
<svg style="position:absolute;left:443.8px;top:199.8px;overflow:visible;" width="24" height="24" viewBox="0 0 24 24">
<path d="M1 1 H22 V21 M1 1 V21 M11.5 1 V21 M1 11 H22" stroke="#d6d6d6" stroke-width="1.5" stroke-dasharray="2 2" fill="none"/>
<path d="M0.5 22.3 H22.5" stroke="#d6d6d6" stroke-width="2"/></svg>
<svg style="position:absolute;left:478.9px;top:209.0px;overflow:visible;" width="10.9" height="7" viewBox="0 0 10.9 7"><path d="M1 1 L5.45 6 L9.9 1" stroke="#e8e8e8" stroke-width="2.0" fill="none" stroke-linecap="round" stroke-linejoin="round"/></svg>
<div style="left:499.2px;top:194.0px;width:1.0px;height:36.0px;background:#575757;"></div>
<svg style="position:absolute;left:510.0px;top:199.5px;overflow:visible;" width="24" height="19" viewBox="0 0 24 19">
<path d="M3 10 L10 3 L17 10 L10 17 Z" stroke="#d6d6d6" stroke-width="1.5" fill="none" stroke-linejoin="round"/>
<path d="M7 6 V1.5 Q7 0.5 8 0.5 Q9.5 0.5 9.5 2 V6" stroke="#d6d6d6" stroke-width="1.4" fill="none"/>
<path d="M17.5 7 Q22 8 20.5 15" stroke="#4aa3e6" stroke-width="2.2" fill="none"/></svg>
<div style="left:509.0px;top:218.3px;width:24.0px;height:5.7px;background:#ffff00;"></div>
<svg style="position:absolute;left:543.9px;top:209.0px;overflow:visible;" width="10.9" height="7" viewBox="0 0 10.9 7"><path d="M1 1 L5.45 6 L9.9 1" stroke="#e8e8e8" stroke-width="2.0" fill="none" stroke-linecap="round" stroke-linejoin="round"/></svg>
<div class="t" style="left:-1417.9px;top:199.5px;width:4000px;text-align:center;font-size:21.5px;line-height:21.5px;font-weight:400;color:#d6d6d6;font-family:'Liberation Sans', sans-serif;"><span id="t233" style="transform-origin:center;transform:scaleX(1.0039)">A</span></div>
<div style="left:570.0px;top:218.3px;width:24.0px;height:5.7px;background:#ff0000;"></div>
<svg style="position:absolute;left:605.0px;top:209.0px;overflow:visible;" width="10.9" height="7" viewBox="0 0 10.9 7"><path d="M1 1 L5.45 6 L9.9 1" stroke="#e8e8e8" stroke-width="2.0" fill="none" stroke-linecap="round" stroke-linejoin="round"/></svg>
<div class="t" style="left:430.0px;top:253.8px;width:4000px;text-align:left;font-size:17.5px;line-height:17.5px;font-weight:400;color:#f2f2f2;font-family:'Liberation Sans', sans-serif;"><span id="t234" style="transform-origin:left;transform:scaleX(0.8849)">Font</span></div>
<svg style="position:absolute;left:616.0px;top:257.0px;overflow:visible;" width="13" height="12" viewBox="0 0 13 12"><path d="M1 11 V1 H12" stroke="#f2f2f2" stroke-width="1.4" fill="none"/><path d="M4 4 L11 11 M11 5.5 V11 H5.5" stroke="#f2f2f2" stroke-width="1.4" fill="none"/></svg>
<div style="left:633.1px;top:135.0px;width:1.0px;height:134.0px;background:#575757;"></div>
<div style="left:653.0px;top:151.7px;width:21.7px;height:2.0px;background:#d6d6d6;"></div>
<div style="left:655.5px;top:157.7px;width:16.5px;height:2.0px;background:#d6d6d6;"></div>
<div style="left:653.0px;top:163.8px;width:21.7px;height:2.0px;background:#d6d6d6;"></div>
<div style="left:685.3px;top:146.3px;width:35.4px;height:35.3px;background:#3c3c3c;border:1.3px solid #8c8c8c;border-radius:6px"></div>
<div style="left:692.0px;top:155.9px;width:22.0px;height:2.0px;background:#d6d6d6;"></div>
<div style="left:694.8px;top:162.0px;width:16.2px;height:2.0px;background:#d6d6d6;"></div>
<div style="left:692.0px;top:168.1px;width:22.0px;height:2.0px;background:#d6d6d6;"></div>
<div style="left:731.3px;top:161.8px;width:21.6px;height:2.0px;background:#d6d6d6;"></div>
<div style="left:734.0px;top:167.8px;width:15.6px;height:2.0px;background:#d6d6d6;"></div>
<div style="left:731.3px;top:173.8px;width:21.6px;height:2.0px;background:#d6d6d6;"></div>
<div style="left:763.3px;top:146.0px;width:1.0px;height:36.0px;background:#575757;"></div>
<svg style="position:absolute;left:771.0px;top:150.0px;overflow:visible;" width="28" height="26" viewBox="0 0 28 26">
<text x="0" y="0" font-size="14" font-family="Liberation Sans" fill="#d6d6d6" transform="translate(5 19) rotate(-45)">ab</text>
<path d="M10 23.5 L25.5 8" stroke="#4aa3e6" stroke-width="1.8"/><path d="M18.5 8 H25.8 V15.5" stroke="#4aa3e6" stroke-width="1.8" fill="none"/></svg>
<svg style="position:absolute;left:805.0px;top:161.4px;overflow:visible;" width="10.4" height="6.6" viewBox="0 0 10.4 6.6"><path d="M1 1 L5.2 5.6 L9.4 1" stroke="#e8e8e8" stroke-width="2.0" fill="none" stroke-linecap="round" stroke-linejoin="round"/></svg>
<div style="left:851.0px;top:144.0px;width:1.0px;height:93.0px;background:#575757;"></div>
<svg style="position:absolute;left:869.0px;top:152.0px;overflow:visible;" width="24" height="25" viewBox="0 0 24 25">
<text x="1" y="10.5" font-size="12.5" font-family="Liberation Sans" fill="#d6d6d6">ab</text>
<text x="1" y="22" font-size="12.5" font-family="Liberation Sans" fill="#d6d6d6">c</text>
<path d="M20.5 12.5 Q22.5 20 14 20.5 H10" stroke="#4aa3e6" stroke-width="1.9" fill="none"/><path d="M13.5 16.5 L9.5 20.5 L13.5 24" stroke="#4aa3e6" stroke-width="1.9" fill="none"/></svg>
<div class="t" style="left:897.0px;top:157.3px;width:4000px;text-align:left;font-size:17.5px;line-height:17.5px;font-weight:400;color:#f2f2f2;font-family:'Liberation Sans', sans-serif;"><span id="t235" style="transform-origin:left;transform:scaleX(0.9982)">Wrap Text</span></div>
<div style="left:653.0px;top:201.2px;width:21.7px;height:2.0px;background:#d6d6d6;"></div>
<div style="left:653.0px;top:207.0px;width:15.9px;height:2.0px;background:#d6d6d6;"></div>
<div style="left:653.0px;top:213.0px;width:21.7px;height:2.0px;background:#d6d6d6;"></div>
<div style="left:653.0px;top:219.1px;width:15.9px;height:2.0px;background:#d6d6d6;"></div>
<div style="left:692.0px;top:201.2px;width:22.0px;height:2.0px;background:#d6d6d6;"></div>
<div style="left:695.0px;top:207.0px;width:15.9px;height:2.0px;background:#d6d6d6;"></div>
<div style="left:692.0px;top:213.0px;width:22.0px;height:2.0px;background:#d6d6d6;"></div>
<div style="left:695.0px;top:219.1px;width:15.9px;height:2.0px;background:#d6d6d6;"></div>
<div style="left:731.3px;top:201.2px;width:21.6px;height:2.0px;background:#d6d6d6;"></div>
<div style="left:736.8px;top:207.0px;width:16.1px;height:2.0px;background:#d6d6d6;"></div>
<div style="left:731.3px;top:213.0px;width:21.6px;height:2.0px;background:#d6d6d6;"></div>
<div style="left:736.8px;top:219.1px;width:16.1px;height:2.0px;background:#d6d6d6;"></div>
<div style="left:763.3px;top:194.3px;width:1.0px;height:35.7px;background:#575757;"></div>
<div style="left:774.2px;top:201.2px;width:21.8px;height:2.0px;background:#d6d6d6;"></div>
<div style="left:774.2px;top:219.1px;width:21.8px;height:2.0px;background:#d6d6d6;"></div>
<div style="left:786.0px;top:207.0px;width:10.0px;height:2.0px;background:#d6d6d6;"></div>
<div style="left:786.0px;top:213.0px;width:10.0px;height:2.0px;background:#d6d6d6;"></div>
<svg style="position:absolute;left:773.5px;top:205.0px;overflow:visible;" width="11" height="12" viewBox="0 0 11 12"><path d="M10 6 H1.5 M5.5 2 L1.5 6 L5.5 10" stroke="#4aa3e6" stroke-width="1.9" fill="none"/></svg>
<div style="left:813.0px;top:201.2px;width:22.0px;height:2.0px;background:#d6d6d6;"></div>
<div style="left:813.0px;top:219.1px;width:22.0px;height:2.0px;background:#d6d6d6;"></div>
<div style="left:825.0px;top:207.0px;width:10.0px;height:2.0px;background:#d6d6d6;"></div>
<div style="left:825.0px;top:213.0px;width:10.0px;height:2.0px;background:#d6d6d6;"></div>
<svg style="position:absolute;left:812.5px;top:205.0px;overflow:visible;" width="11" height="12" viewBox="0 0 11 12"><path d="M0.5 6 H9 M5 2 L9 6 L5 10" stroke="#4aa3e6" stroke-width="1.9" fill="none"/></svg>
<svg style="position:absolute;left:866.0px;top:199.5px;overflow:visible;" width="25" height="24" viewBox="0 0 25 24">
<rect x="1" y="1" width="22.5" height="22" stroke="#d6d6d6" stroke-width="1.6" fill="none"/>
<path d="M1 4.5 H23.5 M1 19.5 H23.5 M12.2 1 V4.5 M12.2 19.5 V23" stroke="#d6d6d6" stroke-width="1.5"/>
<rect x="3" y="6" width="18.5" height="12" stroke="#4aa3e6" stroke-width="1.6" fill="none"/>
<path d="M6 12 H18.5 M8.5 9.3 L5.7 12 L8.5 14.7 M16 9.3 L18.8 12 L16 14.7" stroke="#4aa3e6" stroke-width="1.6" fill="none"/></svg>
<div class="t" style="left:897.5px;top:204.7px;width:4000px;text-align:left;font-size:17.5px;line-height:17.5px;font-weight:400;color:#f2f2f2;font-family:'Liberation Sans', sans-serif;"><span id="t236" style="transform-origin:left;transform:scaleX(1.0159)">Merge &amp; Center</span></div>
<svg style="position:absolute;left:1049.0px;top:208.9px;overflow:visible;" width="10.5" height="7.4" viewBox="0 0 10.5 7.4"><path d="M1 1 L5.25 6.4 L9.5 1" stroke="#e8e8e8" stroke-width="2.0" fill="none" stroke-linecap="round" stroke-linejoin="round"/></svg>
<div class="t" style="left:810.4px;top:253.8px;width:4000px;text-align:left;font-size:17.5px;line-height:17.5px;font-weight:400;color:#f2f2f2;font-family:'Liberation Sans', sans-serif;"><span id="t237" style="transform-origin:left;transform:scaleX(0.9123)">Alignment</span></div>
<svg style="position:absolute;left:1066.0px;top:257.0px;overflow:visible;" width="13" height="12" viewBox="0 0 13 12"><path d="M1 11 V1 H12" stroke="#f2f2f2" stroke-width="1.4" fill="none"/><path d="M4 4 L11 11 M11 5.5 V11 H5.5" stroke="#f2f2f2" stroke-width="1.4" fill="none"/></svg>
<div style="left:1083.1px;top:135.0px;width:1.0px;height:134.0px;background:#575757;"></div>
<div style="left:1096.3px;top:146.2px;width:217.2px;height:35.6px;background:transparent;border:1.3px solid #747474;border-radius:6px"></div>
<div class="t" style="left:1099.7px;top:157.1px;width:4000px;text-align:left;font-size:17.5px;line-height:17.5px;font-weight:400;color:#f2f2f2;font-family:'Liberation Sans', sans-serif;"><span id="t238" style="transform-origin:left;transform:scaleX(0.9315)">General</span></div>
<svg style="position:absolute;left:1299.9px;top:160.8px;overflow:visible;" width="10.7" height="7.3" viewBox="0 0 10.7 7.3"><path d="M1 1 L5.35 6.3 L9.7 1" stroke="#e8e8e8" stroke-width="2.0" fill="none" stroke-linecap="round" stroke-linejoin="round"/></svg>
<div class="t" style="left:-886.9px;top:201.1px;width:4000px;text-align:center;font-size:24px;line-height:24px;font-weight:400;color:#d6d6d6;font-family:'Liberation Sans', sans-serif;"><span id="t239" style="transform-origin:center;transform:scaleX(0.8384)">$</span></div>
<svg style="position:absolute;left:1137.2px;top:209.0px;overflow:visible;" width="10.8" height="7.4" viewBox="0 0 10.8 7.4"><path d="M1 1 L5.4 6.4 L9.8 1" stroke="#e8e8e8" stroke-width="2.0" fill="none" stroke-linecap="round" stroke-linejoin="round"/></svg>
<div class="t" style="left:-824.8px;top:201.9px;width:4000px;text-align:center;font-size:26px;line-height:26px;font-weight:400;color:#d6d6d6;font-family:'Liberation Sans', sans-serif;"><span id="t240" style="transform-origin:center;transform:scaleX(0.9686)">%</span></div>
<svg style="position:absolute;left:1208.0px;top:203.0px;overflow:visible;" width="14" height="20" viewBox="0 0 14 20"><circle cx="7" cy="5.5" r="5" fill="#d6d6d6"/><path d="M11.5 6 Q11.5 15 3 19" stroke="#d6d6d6" stroke-width="2.6" fill="none"/></svg>
<div style="left:1235.1px;top:193.4px;width:1.0px;height:37.1px;background:#575757;"></div>
<div class="t" style="left:-735.4px;top:199.5px;width:4000px;text-align:center;font-size:14px;line-height:14px;font-weight:400;color:#d6d6d6;font-family:'Liberation Sans', sans-serif;"><span id="t241" style="transform-origin:center;transform:scaleX(0.9234)">0</span></div>
<div class="t" style="left:-741.5px;top:211.7px;width:4000px;text-align:center;font-size:14px;line-height:14px;font-weight:400;color:#d6d6d6;font-family:'Liberation Sans', sans-serif;"><span id="t242" style="transform-origin:center;transform:scaleX(0.9965)">.00</span></div>
<svg style="position:absolute;left:1244.0px;top:201.0px;overflow:visible;" width="16" height="12" viewBox="0 0 16 12"><path d="M15 5.6 H2 M6.5 1.2 L1.8 5.6 L6.5 10" stroke="#4aa3e6" stroke-width="1.9" fill="none"/></svg>
<div class="t" style="left:-702.8px;top:199.5px;width:4000px;text-align:center;font-size:14px;line-height:14px;font-weight:400;color:#d6d6d6;font-family:'Liberation Sans', sans-serif;"><span id="t243" style="transform-origin:center;transform:scaleX(0.9759)">.00</span></div>
<div class="t" style="left:-697.0px;top:211.7px;width:4000px;text-align:center;font-size:14px;line-height:14px;font-weight:400;color:#d6d6d6;font-family:'Liberation Sans', sans-serif;"><span id="t244" style="transform-origin:center;transform:scaleX(0.9363)">0</span></div>
<svg style="position:absolute;left:1283.0px;top:211.5px;overflow:visible;" width="16" height="12" viewBox="0 0 16 12"><path d="M0.8 5.8 H13.5 M9 1.3 L13.6 5.8 L9 10.3" stroke="#4aa3e6" stroke-width="1.9" fill="none"/></svg>
<div class="t" style="left:1163.5px;top:253.8px;width:4000px;text-align:left;font-size:17.5px;line-height:17.5px;font-weight:400;color:#f2f2f2;font-family:'Liberation Sans', sans-serif;"><span id="t245" style="transform-origin:left;transform:scaleX(0.9076)">Number</span></div>
<svg style="position:absolute;left:1307.6px;top:257.0px;overflow:visible;" width="13" height="12" viewBox="0 0 13 12"><path d="M1 11 V1 H12" stroke="#f2f2f2" stroke-width="1.4" fill="none"/><path d="M4 4 L11 11 M11 5.5 V11 H5.5" stroke="#f2f2f2" stroke-width="1.4" fill="none"/></svg>
<div style="left:1325.0px;top:135.0px;width:1.0px;height:134.0px;background:#575757;"></div>
<svg style="position:absolute;left:1348.2px;top:145.0px;overflow:visible;" width="45" height="35" viewBox="0 0 45 35"><rect x="1" y="1" width="41" height="33" stroke="#d6d6d6" stroke-width="1.8" fill="none"/><path d="M14 1 V34" stroke="#d6d6d6" stroke-width="1.5"/><path d="M28 1 V34" stroke="#d6d6d6" stroke-width="1.5"/><path d="M1 12 H42" stroke="#d6d6d6" stroke-width="1.5"/><path d="M1 22.5 H42" stroke="#d6d6d6" stroke-width="1.5"/>
<rect x="7.5" y="11.5" width="37.5" height="11" fill="#1a6fcc" stroke="#6cbaf2" stroke-width="1.6"/>
<path d="M20.5 11.5 V22.5 M32 11.5 V22.5" stroke="#6cbaf2" stroke-width="1.4"/>
<path d="M-3 16.5 H17" stroke="#6cbaf2" stroke-width="5"/><path d="M-2 16.5 H17" stroke="#1a6fcc" stroke-width="2"/><path d="M7.5 6.5 L-3.2 16.5 L7.5 26.5" stroke="#6cbaf2" stroke-width="1.9" fill="none"/></svg>
<div class="t" style="left:-630.7px;top:196.1px;width:4000px;text-align:center;font-size:17.5px;line-height:17.5px;font-weight:400;color:#f2f2f2;font-family:'Liberation Sans', sans-serif;"><span id="t246" style="transform-origin:center;transform:scaleX(0.9822)">Insert</span></div>
<svg style="position:absolute;left:1363.0px;top:223.0px;overflow:visible;" width="10.5" height="7.2" viewBox="0 0 10.5 7.2"><path d="M1 1 L5.25 6.2 L9.5 1" stroke="#e8e8e8" stroke-width="2.0" fill="none" stroke-linecap="round" stroke-linejoin="round"/></svg>
<svg style="position:absolute;left:1413.2px;top:145.0px;overflow:visible;" width="42" height="35" viewBox="0 0 42 35"><rect x="1" y="1" width="40" height="33" stroke="#d6d6d6" stroke-width="1.8" fill="none"/><path d="M14 1 V34" stroke="#d6d6d6" stroke-width="1.5"/><path d="M28 1 V34" stroke="#d6d6d6" stroke-width="1.5"/><path d="M1 12 H41" stroke="#d6d6d6" stroke-width="1.5"/><path d="M1 22.5 H41" stroke="#d6d6d6" stroke-width="1.5"/>
<path d="M6 11.5 H28 L33 17 L28 22.5 H6 Z" fill="#1a6fcc" stroke="#6cbaf2" stroke-width="1.6"/>
<path d="M19.5 11.5 V22.5" stroke="#6cbaf2" stroke-width="1.4"/>
<path d="M28.5 9 L42.5 25.5 M42.5 9 L28.5 25.5" stroke="#e05050" stroke-width="2"/></svg>
<div class="t" style="left:-565.7px;top:196.1px;width:4000px;text-align:center;font-size:17.5px;line-height:17.5px;font-weight:400;color:#f2f2f2;font-family:'Liberation Sans', sans-serif;"><span id="t247" style="transform-origin:center;transform:scaleX(0.9606)">Delete</span></div>
<svg style="position:absolute;left:1428.2px;top:223.0px;overflow:visible;" width="10.5" height="7.2" viewBox="0 0 10.5 7.2"><path d="M1 1 L5.25 6.2 L9.5 1" stroke="#e8e8e8" stroke-width="2.0" fill="none" stroke-linecap="round" stroke-linejoin="round"/></svg>
<svg style="position:absolute;left:1479.0px;top:145.0px;overflow:visible;" width="42" height="35" viewBox="0 0 42 35"><rect x="1" y="1" width="40" height="33" stroke="#d6d6d6" stroke-width="1.8" fill="none"/><path d="M11 1 V34" stroke="#d6d6d6" stroke-width="1.5"/><path d="M31 1 V34" stroke="#d6d6d6" stroke-width="1.5"/><path d="M1 12 H41" stroke="#d6d6d6" stroke-width="1.5"/><path d="M1 22.5 H41" stroke="#d6d6d6" stroke-width="1.5"/><rect x="11" y="11.5" width="20" height="11" fill="#1a6fcc" stroke="#6cbaf2" stroke-width="1.6"/></svg>
<svg style="position:absolute;left:1487.5px;top:137.5px;overflow:visible;" width="25" height="6" viewBox="0 0 25 6"><path d="M1 3 H24 M1 0.5 V5.5 M24 0.5 V5.5" stroke="#4aa3e6" stroke-width="1.7"/></svg>
<div class="t" style="left:-499.0px;top:193.5px;width:4000px;text-align:center;font-size:17.5px;line-height:17.5px;font-weight:400;color:#f2f2f2;font-family:'Liberation Sans', sans-serif;"><span id="t248" style="transform-origin:center;transform:scaleX(1.0228)">Format</span></div>
<svg style="position:absolute;left:1493.8px;top:220.9px;overflow:visible;" width="10.5" height="7.2" viewBox="0 0 10.5 7.2"><path d="M1 1 L5.25 6.2 L9.5 1" stroke="#e8e8e8" stroke-width="2.0" fill="none" stroke-linecap="round" stroke-linejoin="round"/></svg>
<div class="t" style="left:1418.0px;top:255.1px;width:4000px;text-align:left;font-size:17.5px;line-height:17.5px;font-weight:400;color:#f2f2f2;font-family:'Liberation Sans', sans-serif;"><span id="t249" style="transform-origin:left;transform:scaleX(0.8225)">Cells</span></div>
<div style="left:1544.0px;top:135.0px;width:1.0px;height:134.0px;background:#575757;"></div>
<svg style="position:absolute;left:1565.5px;top:141.0px;overflow:visible;" width="20" height="23" viewBox="0 0 20 23"><path d="M18.5 5 V1.2 H1.5 L10.5 11.2 L1.5 21.3 H18.5 V17.5" stroke="#d6d6d6" stroke-width="1.7" fill="none" stroke-linejoin="miter"/></svg>
<div class="t" style="left:1593.5px;top:145.1px;width:4000px;text-align:left;font-size:17.5px;line-height:17.5px;font-weight:400;color:#f2f2f2;font-family:'Liberation Sans', sans-serif;"><span id="t250" style="transform-origin:left;transform:scaleX(1.0197)">AutoSum</span></div>
<svg style="position:absolute;left:1694.5px;top:149.2px;overflow:visible;" width="10.4" height="6.9" viewBox="0 0 10.4 6.9"><path d="M1 1 L5.2 5.9 L9.4 1" stroke="#e8e8e8" stroke-width="2.0" fill="none" stroke-linecap="round" stroke-linejoin="round"/></svg>
<svg style="position:absolute;left:1563.0px;top:180.0px;overflow:visible;" width="25" height="23" viewBox="0 0 25 23"><rect x="1" y="1" width="22.5" height="20.5" stroke="#d6d6d6" stroke-width="1.6" fill="none"/><path d="M1 4.8 H23.5" stroke="#d6d6d6" stroke-width="1.3"/>
<path d="M11.5 7 V17.5 M7 13 L11.5 17.8 L16 13" stroke="#4aa3e6" stroke-width="1.8" fill="none"/></svg>
<div class="t" style="left:1593.5px;top:183.7px;width:4000px;text-align:left;font-size:17.5px;line-height:17.5px;font-weight:400;color:#f2f2f2;font-family:'Liberation Sans', sans-serif;"><span id="t251" style="transform-origin:left;transform:scaleX(0.8990)">Fill</span></div>
<svg style="position:absolute;left:1619.8px;top:187.6px;overflow:visible;" width="9.8" height="6.5" viewBox="0 0 9.8 6.5"><path d="M1 1 L4.9 5.5 L8.8 1" stroke="#e8e8e8" stroke-width="2.0" fill="none" stroke-linecap="round" stroke-linejoin="round"/></svg>
<svg style="position:absolute;left:1562.0px;top:218.0px;overflow:visible;" width="26" height="24" viewBox="0 0 26 24"><path d="M2 15.5 L14.5 2 L24 11 L11 23 Z" stroke="#c060d0" stroke-width="1.8" fill="none" stroke-linejoin="round"/>
<path d="M2 15.5 L7.2 10 L16.5 18.5 L11 23 Z" fill="#a040b8" stroke="#c060d0" stroke-width="1.6" stroke-linejoin="round"/></svg>
<div class="t" style="left:1593.5px;top:222.6px;width:4000px;text-align:left;font-size:17.5px;line-height:17.5px;font-weight:400;color:#f2f2f2;font-family:'Liberation Sans', sans-serif;"><span id="t252" style="transform-origin:left;transform:scaleX(0.9324)">Clear</span></div>
<svg style="position:absolute;left:1638.0px;top:226.6px;overflow:visible;" width="9.8" height="6.5" viewBox="0 0 9.8 6.5"><path d="M1 1 L4.9 5.5 L8.8 1" stroke="#e8e8e8" stroke-width="2.0" fill="none" stroke-linecap="round" stroke-linejoin="round"/></svg>
<div class="t" style="left:-262.6px;top:142.2px;width:4000px;text-align:center;font-size:22px;line-height:22px;font-weight:400;color:#4aa3e6;font-family:'Liberation Sans', sans-serif;"><span id="t253" style="transform-origin:center;transform:scaleX(1.0145)">A</span></div>
<div class="t" style="left:-263.3px;top:163.9px;width:4000px;text-align:center;font-size:22px;line-height:22px;font-weight:400;color:#d6d6d6;font-family:'Liberation Sans', sans-serif;"><span id="t254" style="transform-origin:center;transform:scaleX(1.0035)">Z</span></div>
<svg style="position:absolute;left:1747.5px;top:151.0px;overflow:visible;" width="26" height="26" viewBox="0 0 26 26"><path d="M1 1 H24.5 V5 L16 14 V24 H10 V14 L1 5 Z" stroke="#d6d6d6" stroke-width="1.6" fill="none" stroke-linejoin="round"/></svg>
<div class="t" style="left:1725.3px;top:193.7px;width:4000px;text-align:left;font-size:17.5px;line-height:17.5px;font-weight:400;color:#f2f2f2;font-family:'Liberation Sans', sans-serif;"><span id="t255" style="transform-origin:left;transform:scaleX(1.0629)">Sort &amp;</span></div>
<div class="t" style="left:1724.7px;top:217.8px;width:4000px;text-align:left;font-size:17.5px;line-height:17.5px;font-weight:400;color:#f2f2f2;font-family:'Liberation Sans', sans-serif;"><span id="t256" style="transform-origin:left;transform:scaleX(0.9668)">Filter</span></div>
<svg style="position:absolute;left:1767.8px;top:221.3px;overflow:visible;" width="9.4" height="7.2" viewBox="0 0 9.4 7.2"><path d="M1 1 L4.7 6.2 L8.4 1" stroke="#e8e8e8" stroke-width="2.0" fill="none" stroke-linecap="round" stroke-linejoin="round"/></svg>
<svg style="position:absolute;left:1797.0px;top:140.0px;overflow:visible;" width="47" height="46" viewBox="0 0 47 46"><circle cx="29" cy="16.7" r="14.7" stroke="#d6d6d6" stroke-width="1.7" fill="none"/><path d="M18.5 27.5 L2 44" stroke="#d6d6d6" stroke-width="1.7"/></svg>
<div class="t" style="left:1795.5px;top:193.7px;width:4000px;text-align:left;font-size:17.5px;line-height:17.5px;font-weight:400;color:#f2f2f2;font-family:'Liberation Sans', sans-serif;"><span id="t257" style="transform-origin:left;transform:scaleX(1.0261)">Find &amp;</span></div>
<div class="t" style="left:1791.0px;top:217.8px;width:4000px;text-align:left;font-size:17.5px;line-height:17.5px;font-weight:400;color:#f2f2f2;font-family:'Liberation Sans', sans-serif;"><span id="t258" style="transform-origin:left;transform:scaleX(0.9334)">Select</span></div>
<svg style="position:absolute;left:1841.2px;top:221.3px;overflow:visible;" width="10.4" height="7.2" viewBox="0 0 10.4 7.2"><path d="M1 1 L5.2 6.2 L9.4 1" stroke="#e8e8e8" stroke-width="2.0" fill="none" stroke-linecap="round" stroke-linejoin="round"/></svg>
<div class="t" style="left:1682.4px;top:255.1px;width:4000px;text-align:left;font-size:17.5px;line-height:17.5px;font-weight:400;color:#f2f2f2;font-family:'Liberation Sans', sans-serif;"><span id="t259" style="transform-origin:left;transform:scaleX(0.8895)">Editing</span></div>
<div style="left:1867.7px;top:135.0px;width:1.0px;height:134.0px;background:#575757;"></div>
<svg style="position:absolute;left:1894.0px;top:139.5px;overflow:visible;" width="45" height="45" viewBox="0 0 45 45"><rect x="1.8" y="1.8" width="40.5" height="41" stroke="#d9582b" stroke-width="2.6" fill="none"/>
<rect x="6.5" y="6.5" width="13.5" height="13.5" stroke="#d9582b" stroke-width="1.6" fill="none"/>
<rect x="24.5" y="6.5" width="13.5" height="13.5" stroke="#d9582b" stroke-width="1.6" fill="none"/>
<rect x="6.5" y="24.5" width="13.5" height="13.5" stroke="#d9582b" stroke-width="1.6" fill="none"/>
<rect x="24.5" y="24.5" width="13.5" height="13.5" stroke="#d9582b" stroke-width="1.6" fill="none"/></svg>
<div class="t" style="left:1885.3px;top:194.1px;width:4000px;text-align:left;font-size:17.5px;line-height:17.5px;font-weight:400;color:#f2f2f2;font-family:'Liberation Sans', sans-serif;"><span id="t260" style="transform-origin:left;transform:scaleX(1.0464)">Add-ins</span></div>
<div class="t" style="left:1888.2px;top:254.8px;width:4000px;text-align:left;font-size:17.5px;line-height:17.5px;font-weight:400;color:#f2f2f2;font-family:'Liberation Sans', sans-serif;"><span id="t261" style="transform-origin:left;transform:scaleX(0.8931)">Add-ins</span></div>
<div style="left:1963.0px;top:135.0px;width:1.0px;height:134.0px;background:#575757;"></div>
<svg style="position:absolute;left:1988.5px;top:140.5px;overflow:visible;" width="43" height="43" viewBox="0 0 43 43"><rect x="1" y="1" width="40.5" height="41" stroke="#d6d6d6" stroke-width="1.7" fill="none"/>
<rect x="1" y="1" width="40.5" height="5.5" fill="#8a8a8a"/>
<path d="M1 18 H6 M36 18 H41.5 M1 29 H9 M33 29 H41.5 M13.5 31 V42 M26.5 31 V42" stroke="#d6d6d6" stroke-width="1.5"/>
<circle cx="19.5" cy="18.5" r="12.3" stroke="#d6d6d6" stroke-width="1.7" fill="#292929"/>
<path d="M28.5 27.5 L41 41" stroke="#d6d6d6" stroke-width="1.9"/>
<rect x="12.5" y="17" width="3.5" height="7" fill="#8a8a8a"/><rect x="17" y="12" width="3.5" height="12" fill="#f0f0f0"/><rect x="21.5" y="14.5" width="3.5" height="9.5" fill="#4aa3e6"/></svg>
<div class="t" style="left:10.5px;top:194.1px;width:4000px;text-align:center;font-size:17.5px;line-height:17.5px;font-weight:400;color:#f2f2f2;font-family:'Liberation Sans', sans-serif;"><span id="t262" style="transform-origin:center;transform:scaleX(0.9813)">Analyze</span></div>
<div class="t" style="left:10.5px;top:217.5px;width:4000px;text-align:center;font-size:17.5px;line-height:17.5px;font-weight:400;color:#f2f2f2;font-family:'Liberation Sans', sans-serif;"><span id="t263" style="transform-origin:center;transform:scaleX(0.9576)">Data</span></div>
<div style="left:2055.9px;top:135.0px;width:1.0px;height:134.0px;background:#575757;"></div>
<svg style="position:absolute;left:2156.0px;top:142.5px;overflow:visible;" width="113" height="113" viewBox="0 0 113 113"><circle cx="56.3" cy="56.2" r="56" fill="#ffffff"/>
<rect x="25.6" y="30.4" width="61.4" height="52.6" fill="#5c64e8"/>
<rect x="34" y="38.5" width="19" height="14.9" fill="#ffffff"/><rect x="60.3" y="38.5" width="18.6" height="14.9" fill="#ffffff"/>
<rect x="34" y="60.4" width="19" height="14.9" fill="#ffffff"/><rect x="60.3" y="60.4" width="18.6" height="14.9" fill="#ffffff"/></svg>
<div class="t" style="left:304.9px;top:159.2px;width:4000px;text-align:center;font-size:43.5px;line-height:43.5px;font-weight:700;color:#ffffff;font-family:'Liberation Sans', sans-serif;-webkit-text-stroke:3.2px #fff"><span id="t264" style="transform-origin:center;transform:scaleX(0.7149)">F</span></div>
<div class="t" style="left:325.9px;top:159.2px;width:4000px;text-align:center;font-size:43.5px;line-height:43.5px;font-weight:700;color:#ffffff;font-family:'Liberation Sans', sans-serif;-webkit-text-stroke:3.2px #fff"><span id="t265" style="transform-origin:center;transform:scaleX(0.6532)">I</span></div>
<div class="t" style="left:351.0px;top:159.2px;width:4000px;text-align:center;font-size:43.5px;line-height:43.5px;font-weight:700;color:#ffffff;font-family:'Liberation Sans', sans-serif;-webkit-text-stroke:3.2px #fff"><span id="t266" style="transform-origin:center;transform:scaleX(0.9229)">N</span></div>
<div class="t" style="left:391.6px;top:159.2px;width:4000px;text-align:center;font-size:43.5px;line-height:43.5px;font-weight:700;color:#ffffff;font-family:'Liberation Sans', sans-serif;-webkit-text-stroke:3.2px #fff"><span id="t267" style="transform-origin:center;transform:scaleX(0.9821)">M</span></div>
<div class="t" style="left:469.1px;top:159.2px;width:4000px;text-align:center;font-size:43.5px;line-height:43.5px;font-weight:700;color:#ffffff;font-family:'Liberation Sans', sans-serif;-webkit-text-stroke:3.2px #fff"><span id="t268" style="transform-origin:center;transform:scaleX(0.8975)">D</span></div>
<div class="t" style="left:500.3px;top:159.2px;width:4000px;text-align:center;font-size:43.5px;line-height:43.5px;font-weight:700;color:#ffffff;font-family:'Liberation Sans', sans-serif;-webkit-text-stroke:3.2px #fff"><span id="t269" style="transform-origin:center;transform:scaleX(0.7754)">E</span></div>
<div class="t" style="left:525.6px;top:159.2px;width:4000px;text-align:center;font-size:43.5px;line-height:43.5px;font-weight:700;color:#ffffff;font-family:'Liberation Sans', sans-serif;-webkit-text-stroke:3.2px #fff"><span id="t270" style="transform-origin:center;transform:scaleX(0.6660)">L</span></div>
<div class="t" style="left:547.8px;top:159.2px;width:4000px;text-align:center;font-size:43.5px;line-height:43.5px;font-weight:700;color:#ffffff;font-family:'Liberation Sans', sans-serif;-webkit-text-stroke:3.2px #fff"><span id="t271" style="transform-origin:center;transform:scaleX(0.8099)">S</span></div>
<div class="t" style="left:574.6px;top:159.2px;width:4000px;text-align:center;font-size:43.5px;line-height:43.5px;font-weight:700;color:#ffffff;font-family:'Liberation Sans', sans-serif;-webkit-text-stroke:3.2px #fff"><span id="t272" style="transform-origin:center;transform:scaleX(0.7563)">L</span></div>
<div class="t" style="left:602.6px;top:159.2px;width:4000px;text-align:center;font-size:43.5px;line-height:43.5px;font-weight:700;color:#ffffff;font-family:'Liberation Sans', sans-serif;-webkit-text-stroke:3.2px #fff"><span id="t273" style="transform-origin:center;transform:scaleX(1.0789)">A</span></div>
<div class="t" style="left:639.6px;top:159.2px;width:4000px;text-align:center;font-size:43.5px;line-height:43.5px;font-weight:700;color:#ffffff;font-family:'Liberation Sans', sans-serif;-webkit-text-stroke:3.2px #fff"><span id="t274" style="transform-origin:center;transform:scaleX(0.7447)">B</span></div>
<svg style="position:absolute;left:2410.0px;top:150.0px;overflow:visible;" width="44" height="50" viewBox="0 0 44 50"><circle cx="21.75" cy="29.8" r="13.9" stroke="#ffffff" stroke-width="8" fill="none"/><rect x="12.9" y="8" width="17" height="15" fill="#292929"/><rect x="16.9" y="4.9" width="9" height="26.5" rx="4.5" fill="#ffffff"/></svg>
<div class="t" style="left:306.4px;top:208.1px;width:4000px;text-align:center;font-size:34px;line-height:34px;font-weight:400;color:#ffffff;font-family:'Liberation Sans', sans-serif;-webkit-text-stroke:0.9px #fff"><span id="t275" style="transform-origin:center;transform:scaleX(1.0779)">T</span></div>
<div class="t" style="left:347.8px;top:208.1px;width:4000px;text-align:center;font-size:34px;line-height:34px;font-weight:400;color:#ffffff;font-family:'Liberation Sans', sans-serif;-webkit-text-stroke:0.9px #fff"><span id="t276" style="transform-origin:center;transform:scaleX(1.0147)">e</span></div>
<div class="t" style="left:397.1px;top:208.1px;width:4000px;text-align:center;font-size:34px;line-height:34px;font-weight:400;color:#ffffff;font-family:'Liberation Sans', sans-serif;-webkit-text-stroke:0.9px #fff"><span id="t277" style="transform-origin:center;transform:scaleX(1.0590)">m</span></div>
<div class="t" style="left:447.2px;top:208.1px;width:4000px;text-align:center;font-size:34px;line-height:34px;font-weight:400;color:#ffffff;font-family:'Liberation Sans', sans-serif;-webkit-text-stroke:0.9px #fff"><span id="t278" style="transform-origin:center;transform:scaleX(0.9671)">p</span></div>
<div class="t" style="left:485.3px;top:208.1px;width:4000px;text-align:center;font-size:34px;line-height:34px;font-weight:400;color:#ffffff;font-family:'Liberation Sans', sans-serif;-webkit-text-stroke:0.9px #fff"><span id="t279" style="transform-origin:center;transform:scaleX(0.5025)">l</span></div>
<div class="t" style="left:521.1px;top:208.1px;width:4000px;text-align:center;font-size:34px;line-height:34px;font-weight:400;color:#ffffff;font-family:'Liberation Sans', sans-serif;-webkit-text-stroke:0.9px #fff"><span id="t280" style="transform-origin:center;transform:scaleX(0.9724)">a</span></div>
<div class="t" style="left:560.1px;top:208.1px;width:4000px;text-align:center;font-size:34px;line-height:34px;font-weight:400;color:#ffffff;font-family:'Liberation Sans', sans-serif;-webkit-text-stroke:0.9px #fff"><span id="t281" style="transform-origin:center;transform:scaleX(1.2483)">t</span></div>
<div class="t" style="left:600.7px;top:208.1px;width:4000px;text-align:center;font-size:34px;line-height:34px;font-weight:400;color:#ffffff;font-family:'Liberation Sans', sans-serif;-webkit-text-stroke:0.9px #fff"><span id="t282" style="transform-origin:center;transform:scaleX(1.0570)">e</span></div>
<div class="t" style="left:642.9px;top:208.1px;width:4000px;text-align:center;font-size:34px;line-height:34px;font-weight:400;color:#ffffff;font-family:'Liberation Sans', sans-serif;-webkit-text-stroke:0.9px #fff"><span id="t283" style="transform-origin:center;transform:scaleX(1.0824)">s</span></div>
<svg style="position:absolute;left:2848.9px;top:252.6px;overflow:visible;" width="16.5" height="10" viewBox="0 0 16.5 10"><path d="M1 1 L8.25 9 L15.5 1" stroke="#f0f0f0" stroke-width="1.8" fill="none" stroke-linecap="round" stroke-linejoin="round"/></svg>
<div style="left:11.0px;top:1670.0px;width:2849.0px;height:48.0px;background:#0b0b0b;"></div>
<div style="left:11.0px;top:1717.5px;width:2879.0px;height:1.0px;background:#262626;"></div>
<div style="left:11.0px;top:1718.5px;width:2879.0px;height:32.5px;background:#161616;"></div>
<svg style="position:absolute;left:44.0px;top:1685.0px;overflow:visible;" width="14" height="17" viewBox="0 0 14 17"><path d="M11 1.5 L3 8.5 L11 15.5" stroke="#bdbdbd" stroke-width="1.5" fill="none"/></svg>
<svg style="position:absolute;left:93.0px;top:1685.0px;overflow:visible;" width="14" height="17" viewBox="0 0 14 17"><path d="M3 1.5 L11 8.5 L3 15.5" stroke="#bdbdbd" stroke-width="1.5" fill="none"/></svg>
<div class="t" style="left:-1768.8px;top:1686.1px;width:4000px;text-align:center;font-size:20px;line-height:20px;font-weight:400;color:#ffffff;font-family:'Liberation Sans', sans-serif;"><span id="t284" style="transform-origin:center;transform:scaleX(1.0304)">Contents</span></div>
<div style="left:299.0px;top:1676.0px;width:128.0px;height:35.8px;background:#fdea6b;border-radius:7px"></div>
<div class="t" style="left:-1637.0px;top:1685.9px;width:4000px;text-align:center;font-size:20px;line-height:20px;font-weight:400;color:#111111;font-family:'Liberation Sans', sans-serif;"><span id="t285" style="transform-origin:center;transform:scaleX(1.0139)">Dashboard</span></div>
<div style="left:440.0px;top:1676.0px;width:106.0px;height:35.8px;background:#fdea6b;border-radius:7px"></div>
<div class="t" style="left:-1507.0px;top:1685.9px;width:4000px;text-align:center;font-size:20px;line-height:20px;font-weight:400;color:#111111;font-family:'Liberation Sans', sans-serif;"><span id="t286" style="transform-origin:center;">Revenue</span></div>
<div style="left:559.0px;top:1676.0px;width:157.3px;height:35.8px;background:#fdea6b;border-radius:7px"></div>
<div class="t" style="left:-1362.3px;top:1685.9px;width:4000px;text-align:center;font-size:20px;line-height:20px;font-weight:400;color:#111111;font-family:'Liberation Sans', sans-serif;"><span id="t287" style="transform-origin:center;">COGS &amp; OPEX</span></div>
<div style="left:730.0px;top:1676.0px;width:88.0px;height:35.8px;background:#fdea6b;border-radius:7px"></div>
<div class="t" style="left:-1226.0px;top:1685.9px;width:4000px;text-align:center;font-size:20px;line-height:20px;font-weight:400;color:#111111;font-family:'Liberation Sans', sans-serif;"><span id="t288" style="transform-origin:center;">Payroll</span></div>
<div style="left:823.0px;top:1670.0px;width:104.5px;height:10.0px;background:#0b0b0b;border-radius:0"></div>
<div style="left:832.0px;top:1670.0px;width:86.5px;height:42.0px;background:#fbf9ee;border-radius:0 0 7px 7px"></div>
<svg style="position:absolute;left:823.0px;top:1670.0px;overflow:visible;" width="9" height="9" viewBox="0 0 9 9"><path d="M0 0 H9 V9 Q9 0 0 0 Z" fill="#ffffff"/></svg>
<svg style="position:absolute;left:918.5px;top:1670.0px;overflow:visible;" width="9" height="9" viewBox="0 0 9 9"><path d="M9 0 H0 V9 Q0 0 9 0 Z" fill="#ffffff"/></svg>
<div class="t" style="left:-1124.2px;top:1680.9px;width:4000px;text-align:center;font-size:20px;line-height:20px;font-weight:400;color:#1a1a1a;font-family:'Liberation Sans', sans-serif;"><span id="t289" style="transform-origin:center;transform:scaleX(0.9143)">CAPEX</span></div>
<div style="left:844.8px;top:1705.2px;width:62.0px;height:2.8px;background:#1e8a45;"></div>
<div style="left:932.0px;top:1676.0px;width:112.8px;height:35.8px;background:#fdea6b;border-radius:7px"></div>
<div class="t" style="left:-1011.6px;top:1685.9px;width:4000px;text-align:center;font-size:20px;line-height:20px;font-weight:400;color:#111111;font-family:'Liberation Sans', sans-serif;"><span id="t290" style="transform-origin:center;transform:scaleX(1.0010)">CapTable</span></div>
<div style="left:1058.0px;top:1676.0px;width:89.3px;height:35.8px;background:#fdea6b;border-radius:7px"></div>
<div class="t" style="left:-897.3px;top:1685.9px;width:4000px;text-align:center;font-size:20px;line-height:20px;font-weight:400;color:#111111;font-family:'Liberation Sans', sans-serif;"><span id="t291" style="transform-origin:center;">Capital</span></div>
<div style="left:1161.0px;top:1676.0px;width:42.0px;height:35.8px;background:#4db3e8;border-radius:7px"></div>
<div class="t" style="left:-818.0px;top:1685.9px;width:4000px;text-align:center;font-size:20px;line-height:20px;font-weight:400;color:#0d1520;font-family:'Liberation Sans', sans-serif;"><span id="t292" style="transform-origin:center;">IS</span></div>
<div style="left:1216.3px;top:1676.0px;width:47.5px;height:35.8px;background:#4db3e8;border-radius:7px"></div>
<div class="t" style="left:-760.0px;top:1685.9px;width:4000px;text-align:center;font-size:20px;line-height:20px;font-weight:400;color:#0d1520;font-family:'Liberation Sans', sans-serif;"><span id="t293" style="transform-origin:center;">CF</span></div>
<div style="left:1277.0px;top:1676.0px;width:47.7px;height:35.8px;background:#4db3e8;border-radius:7px"></div>
<div class="t" style="left:-699.2px;top:1685.9px;width:4000px;text-align:center;font-size:20px;line-height:20px;font-weight:400;color:#0d1520;font-family:'Liberation Sans', sans-serif;"><span id="t294" style="transform-origin:center;">BS</span></div>
<div style="left:1338.0px;top:1676.0px;width:114.5px;height:35.8px;background:#4db3e8;border-radius:7px"></div>
<div class="t" style="left:-604.8px;top:1685.9px;width:4000px;text-align:center;font-size:20px;line-height:20px;font-weight:400;color:#0d1520;font-family:'Liberation Sans', sans-serif;"><span id="t295" style="transform-origin:center;">Scenarios</span></div>
<div style="left:1466.0px;top:1676.0px;width:114.4px;height:35.8px;background:#4db3e8;border-radius:7px"></div>
<div class="t" style="left:-476.8px;top:1685.9px;width:4000px;text-align:center;font-size:20px;line-height:20px;font-weight:400;color:#0d1520;font-family:'Liberation Sans', sans-serif;"><span id="t296" style="transform-origin:center;">Valuation</span></div>
<div style="left:1593.7px;top:1676.0px;width:113.7px;height:35.8px;background:#4db3e8;border-radius:7px"></div>
<div class="t" style="left:-349.4px;top:1685.9px;width:4000px;text-align:center;font-size:20px;line-height:20px;font-weight:400;color:#0d1520;font-family:'Liberation Sans', sans-serif;"><span id="t297" style="transform-origin:center;">Summary</span></div>
<div style="left:1721.0px;top:1676.0px;width:47.3px;height:35.8px;background:#4db3e8;border-radius:7px"></div>
<div class="t" style="left:-255.3px;top:1685.9px;width:4000px;text-align:center;font-size:20px;line-height:20px;font-weight:400;color:#0d1520;font-family:'Liberation Sans', sans-serif;"><span id="t298" style="transform-origin:center;">BE</span></div>
<div style="left:1782.0px;top:1676.0px;width:71.5px;height:35.8px;background:#4db3e8;border-radius:7px"></div>
<div class="t" style="left:-182.2px;top:1685.9px;width:4000px;text-align:center;font-size:20px;line-height:20px;font-weight:400;color:#0d1520;font-family:'Liberation Sans', sans-serif;"><span id="t299" style="transform-origin:center;">ROIC</span></div>
<div style="left:1867.3px;top:1676.0px;width:84.4px;height:35.8px;background:#4db3e8;border-radius:7px"></div>
<div class="t" style="left:-90.5px;top:1685.9px;width:4000px;text-align:center;font-size:20px;line-height:20px;font-weight:400;color:#0d1520;font-family:'Liberation Sans', sans-serif;"><span id="t300" style="transform-origin:center;">Charts</span></div>
<div style="left:1965.2px;top:1676.0px;width:63.8px;height:35.8px;background:#4db3e8;border-radius:7px"></div>
<div class="t" style="left:-2.9px;top:1685.9px;width:4000px;text-align:center;font-size:20px;line-height:20px;font-weight:400;color:#0d1520;font-family:'Liberation Sans', sans-serif;"><span id="t301" style="transform-origin:center;">KPIs</span></div>
<div style="left:2042.0px;top:1676.0px;width:30.0px;height:35.8px;background:#4db3e8;border-radius:7px 0 0 7px"></div>
<div style="left:2042px;top:1676px;width:30px;height:36px;overflow:hidden"><div class="t" style="left:13px;top:10.1px;font-size:20px;line-height:20px;color:#0d1520">Sc</div></div>
<div style="left:292.3px;top:1680.0px;width:1.0px;height:28.0px;background:#6a6a6a;"></div>
<div style="left:433.0px;top:1680.0px;width:1.0px;height:28.0px;background:#6a6a6a;"></div>
<div style="left:552.0px;top:1680.0px;width:1.0px;height:28.0px;background:#6a6a6a;"></div>
<div style="left:722.6px;top:1680.0px;width:1.0px;height:28.0px;background:#6a6a6a;"></div>
<div style="left:824.5px;top:1680.0px;width:1.0px;height:28.0px;background:#6a6a6a;"></div>
<div style="left:924.8px;top:1680.0px;width:1.0px;height:28.0px;background:#6a6a6a;"></div>
<div style="left:1050.9px;top:1680.0px;width:1.0px;height:28.0px;background:#6a6a6a;"></div>
<div style="left:1153.7px;top:1680.0px;width:1.0px;height:28.0px;background:#6a6a6a;"></div>
<div style="left:1209.2px;top:1680.0px;width:1.0px;height:28.0px;background:#6a6a6a;"></div>
<div style="left:1269.9px;top:1680.0px;width:1.0px;height:28.0px;background:#6a6a6a;"></div>
<div style="left:1330.8px;top:1680.0px;width:1.0px;height:28.0px;background:#6a6a6a;"></div>
<div style="left:1458.8px;top:1680.0px;width:1.0px;height:28.0px;background:#6a6a6a;"></div>
<div style="left:1586.6px;top:1680.0px;width:1.0px;height:28.0px;background:#6a6a6a;"></div>
<div style="left:1713.7px;top:1680.0px;width:1.0px;height:28.0px;background:#6a6a6a;"></div>
<div style="left:1774.7px;top:1680.0px;width:1.0px;height:28.0px;background:#6a6a6a;"></div>
<div style="left:1859.9px;top:1680.0px;width:1.0px;height:28.0px;background:#6a6a6a;"></div>
<div style="left:1958.0px;top:1680.0px;width:1.0px;height:28.0px;background:#6a6a6a;"></div>
<div style="left:2035.0px;top:1680.0px;width:1.0px;height:28.0px;background:#6a6a6a;"></div>
<svg style="position:absolute;left:2086.0px;top:1690.0px;overflow:visible;" width="20" height="6" viewBox="0 0 20 6"><circle cx="2.6" cy="2.8" r="2.1" fill="#e0e0e0"/><circle cx="9.0" cy="2.8" r="2.1" fill="#e0e0e0"/><circle cx="15.4" cy="2.8" r="2.1" fill="#e0e0e0"/></svg>
<svg style="position:absolute;left:2134.0px;top:1684.0px;overflow:visible;" width="19" height="18" viewBox="0 0 19 18"><path d="M9.4 0.5 V17.5 M0.8 8.7 H18" stroke="#e8e8e8" stroke-width="1.6"/></svg>
<svg style="position:absolute;left:2189.0px;top:1686.0px;overflow:visible;" width="6" height="17" viewBox="0 0 6 17"><rect x="0.8" y="0.8" width="3.4" height="3.4" fill="#e8e8e8"/><rect x="0.8" y="6.8" width="3.4" height="3.4" fill="#e8e8e8"/><rect x="0.8" y="12.8" width="3.4" height="3.4" fill="#e8e8e8"/></svg>
<div style="left:2216.0px;top:1680.5px;width:644.0px;height:25.5px;background:#161616;border-radius:12.7px"></div>
<svg style="position:absolute;left:2223.0px;top:1686.0px;overflow:visible;" width="12" height="14" viewBox="0 0 12 14"><path d="M11 0.8 V13.2 L1.2 7 Z" fill="#9d9d9d" stroke="#9d9d9d" stroke-linejoin="round" stroke-width="1.2"/></svg>
<div style="left:2241.6px;top:1687.0px;width:55.7px;height:12.0px;background:#9d9d9d;border-radius:6px"></div>
<svg style="position:absolute;left:2842.0px;top:1686.0px;overflow:visible;" width="12" height="14" viewBox="0 0 12 14"><path d="M1 0.8 V13.2 L10.8 7 Z" fill="#9d9d9d" stroke="#9d9d9d" stroke-linejoin="round" stroke-width="1.2"/></svg>
<div class="t" style="left:27.0px;top:1726.5px;width:4000px;text-align:left;font-size:18px;line-height:18px;font-weight:400;color:#f0f0f0;font-family:'Liberation Sans', sans-serif;"><span id="t302" style="transform-origin:left;transform:scaleX(0.8149)">Ready</span></div>
<svg style="position:absolute;left:98.0px;top:1725.0px;overflow:visible;" width="25" height="22" viewBox="0 0 25 22"><path d="M1.9 19 V1.8 H22 V9.5 M1.9 19 H9.5" stroke="#ffffff" stroke-width="1.7" fill="none"/><path d="M2 4.5 H22" stroke="#ffffff" stroke-width="1.7"/>
<path d="M4.5 7.8 H9 M4.5 10.7 H8 M4.5 13.6 H7.5" stroke="#ffffff" stroke-width="1.5"/><circle cx="15.7" cy="13.6" r="6.4" stroke="#ffffff" stroke-width="1.8" fill="#161616"/><circle cx="15.7" cy="13.6" r="3.2" fill="#ffffff"/></svg>
<svg style="position:absolute;left:145.0px;top:1723.0px;overflow:visible;" width="24" height="24" viewBox="0 0 24 24"><circle cx="10.3" cy="4.6" r="2.9" stroke="#ffffff" stroke-width="1.6" fill="none"/>
<path d="M2.2 7.8 Q6 9.6 8.3 9.4 L8.9 15.5 L6.8 21 M19 7.8 Q15 9.6 12.6 9.4 L12 13.5" stroke="#ffffff" stroke-width="4" fill="none" stroke-linecap="round" stroke-linejoin="round"/>
<path d="M2.2 7.8 Q6 9.6 8.3 9.4 L8.9 15.5 L6.8 21 M19 7.8 Q15 9.6 12.6 9.4 L12 13.5" stroke="#161616" stroke-width="1.2" fill="none" stroke-linecap="round" stroke-linejoin="round"/>
<path d="M9 15.8 L10.5 19" stroke="#ffffff" stroke-width="1.5"/>
<path d="M12.7 14 L21.8 22.6 M21.8 14 L12.7 22.6" stroke="#ffffff" stroke-width="1.5"/></svg>
<div class="t" style="left:173.5px;top:1726.5px;width:4000px;text-align:left;font-size:18px;line-height:18px;font-weight:700;color:#f0f0f0;font-family:'Liberation Sans', sans-serif;"><span id="t303" style="transform-origin:left;transform:scaleX(0.8694)">Accessibility: Investigate</span></div>
<div style="left:2445.0px;top:1719.6px;width:59.8px;height:31.0px;background:#262626;"></div>
<svg style="position:absolute;left:2464.0px;top:1724.5px;overflow:visible;" width="21" height="20" viewBox="0 0 21 20"><rect x="1" y="1" width="18.6" height="17.6" stroke="#f0f0f0" stroke-width="1.9" fill="none"/><path d="M7.2 1 V18.6 M13.4 1 V18.6 M1 6.9 H19.6 M1 12.8 H19.6" stroke="#f0f0f0" stroke-width="1.7"/></svg>
<svg style="position:absolute;left:2523.5px;top:1724.5px;overflow:visible;" width="23" height="20" viewBox="0 0 23 20"><rect x="1" y="1" width="20.5" height="17.6" stroke="#f0f0f0" stroke-width="1.9" fill="none"/><rect x="6" y="4.6" width="10.8" height="10.4" stroke="#f0f0f0" stroke-width="1.6" fill="none"/><path d="M8.3 7.6 H14.6 M8.3 9.9 H14.6 M8.3 12.2 H14.6" stroke="#f0f0f0" stroke-width="1.2"/></svg>
<svg style="position:absolute;left:2583.5px;top:1724.5px;overflow:visible;" width="23" height="20" viewBox="0 0 23 20"><path d="M1 1 H21.8 V19 H1 Z" stroke="#f0f0f0" stroke-width="1.9" fill="none"/><path d="M7.7 1 V7.8 M13.5 1 V12 H21.8" stroke="#f0f0f0" stroke-width="1.7" fill="none"/></svg>
<div style="left:2633.0px;top:1732.7px;width:11.0px;height:1.5px;background:#e0e0e0;"></div>
<div style="left:2652.7px;top:1733.8px;width:148.0px;height:2.0px;background:#bdbdbd;"></div>
<div style="left:2726.5px;top:1730.5px;width:1.6px;height:8.5px;background:#bdbdbd;"></div>
<div style="left:2733.0px;top:1726.0px;width:8.0px;height:17.0px;background:#b0b0b0;border-radius:1px"></div>
<svg style="position:absolute;left:2808.5px;top:1726.5px;overflow:visible;" width="13" height="13" viewBox="0 0 13 13"><path d="M6.5 0.5 V12.5 M0.5 6.5 H12.5" stroke="#e0e0e0" stroke-width="1.4"/></svg>
<div class="t" style="left:2839.4px;top:1727.4px;width:4000px;text-align:left;font-size:17px;line-height:17px;font-weight:400;color:#e8e8e8;font-family:'Liberation Sans', sans-serif;"><span id="t304" style="transform-origin:left;transform:scaleX(0.9061)">140%</span></div>
<div style="left:2890.0px;top:0.0px;width:12.0px;height:1762.0px;background:#000000;"></div>
</body></html>
